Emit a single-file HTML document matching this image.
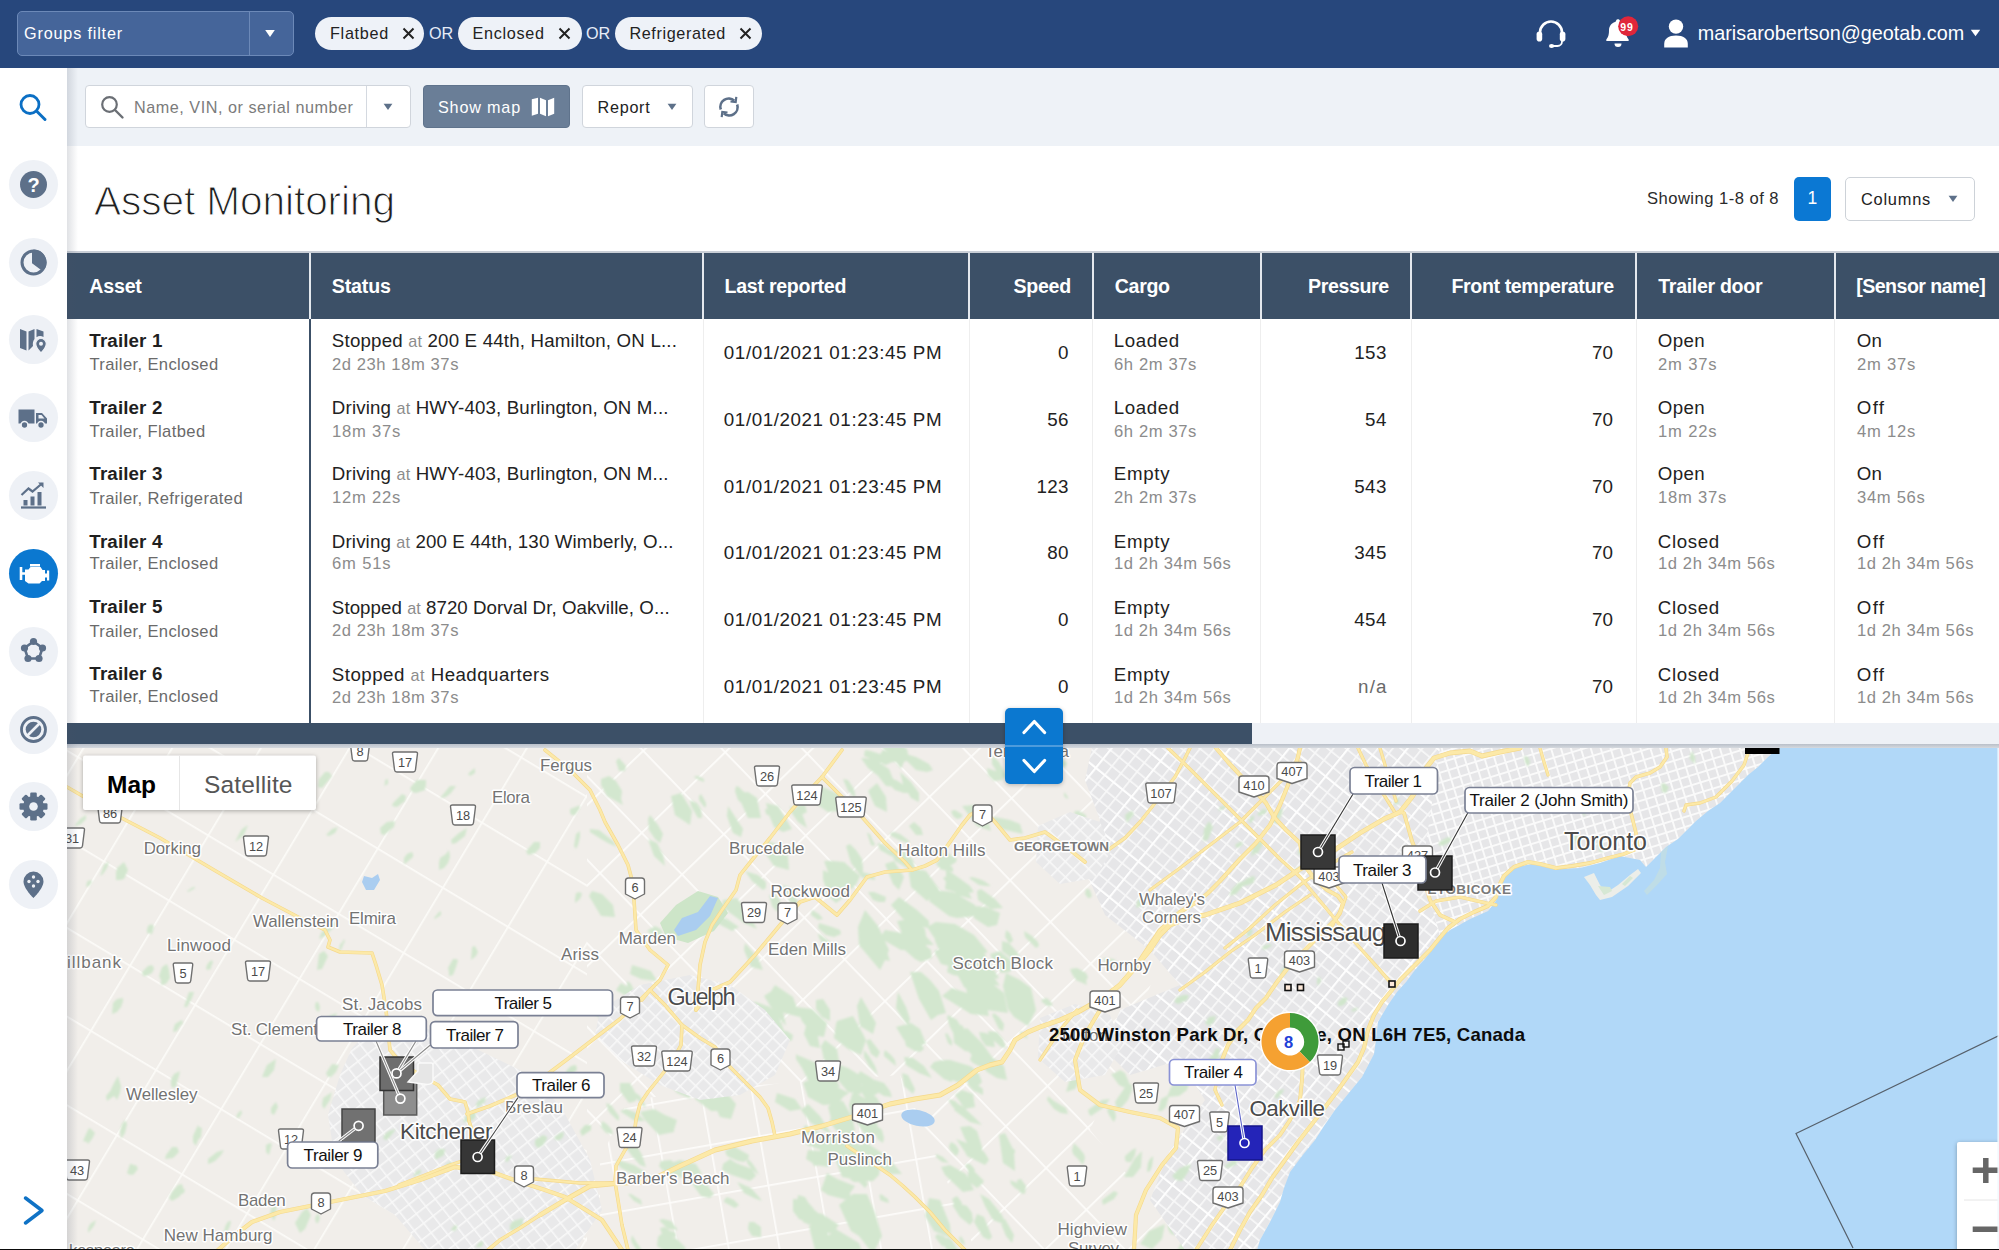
<!DOCTYPE html>
<html lang="en">
<head>
<meta charset="utf-8">
<title>Asset Monitoring</title>
<style>
*{box-sizing:border-box;margin:0;padding:0}
html,body{width:1999px;height:1250px;overflow:hidden;background:#fff}
body{position:relative;font-family:"Liberation Sans",Arial,sans-serif;color:#222}
.abs{position:absolute}
.z6{z-index:6}
.t{position:absolute;white-space:nowrap;line-height:1;z-index:3}
#topbar{position:absolute;left:0;top:0;width:1999px;height:68px;background:#27477c;z-index:2}
#gf{position:absolute;left:17px;top:11px;width:277px;height:45px;background:#45659a;border:1px solid #6c89b8;border-radius:5px;z-index:2}
#gf .sep{position:absolute;left:231px;top:0;width:1px;height:43px;background:#6c89b8}
.pill{position:absolute;top:17px;height:33px;border-radius:17px;background:#eef2f8;z-index:2}
svg.abs{z-index:3}
svg.abs.z6{z-index:6}
#side{position:absolute;left:0;top:68px;width:67px;height:1182px;background:#fff;z-index:5}
#sideshadow{position:absolute;left:67px;top:68px;width:11px;height:1182px;background:linear-gradient(90deg,rgba(70,80,100,.17),rgba(70,80,100,0));z-index:5}
.ic{position:absolute;left:9px;width:49px;height:49px;border-radius:50%;z-index:6}
.ic svg{position:absolute;left:0;top:0}
#toolbar{position:absolute;left:67px;top:68px;width:1932px;height:78px;background:#eef2f7}
.btn{position:absolute;top:85px;height:43px;border-radius:4px;background:#fff;border:1px solid #d0d5dc;z-index:2}
#thead{position:absolute;left:67px;top:253px;width:1932px;height:66px;background:#3c5067}
.hd{position:absolute;top:253px;width:2px;height:66px;background:#e4e8ed;z-index:2}
.bd{position:absolute;top:319px;width:1px;height:404px;background:#eeeeee}

</style>
</head>
<body>

<!-- top bar -->
<div id="topbar"></div>
<div id="gf"><div class="sep"></div></div>
<svg class="abs" style="left:264px;top:29px" width="12" height="9" viewBox="0 0 12 9"><path d="M1.2 1h9.6L6 8z" fill="#fff"/></svg>
<div class="pill" style="left:315px;width:109px"></div>
<svg class="abs" style="left:401.5px;top:27px" width="13" height="13" viewBox="0 0 13 13"><path d="M1.5 1.5l10 10M11.5 1.5l-10 10" stroke="#222" stroke-width="2" fill="none"/></svg>
<div class="pill" style="left:458px;width:124px"></div>
<svg class="abs" style="left:558.3px;top:27px" width="13" height="13" viewBox="0 0 13 13"><path d="M1.5 1.5l10 10M11.5 1.5l-10 10" stroke="#222" stroke-width="2" fill="none"/></svg>
<div class="pill" style="left:615px;width:147px"></div>
<svg class="abs" style="left:739px;top:27px" width="13" height="13" viewBox="0 0 13 13"><path d="M1.5 1.5l10 10M11.5 1.5l-10 10" stroke="#222" stroke-width="2" fill="none"/></svg>
<svg class="abs" style="left:1534px;top:17px" width="34" height="34" viewBox="0 0 34 34">
<path d="M6 19v-3.5a11 11 0 0 1 22 0V19" fill="none" stroke="#fff" stroke-width="2.6"/>
<rect x="2.6" y="14.5" width="5.6" height="10" rx="2.8" fill="#fff"/><rect x="25.8" y="14.5" width="5.6" height="10" rx="2.8" fill="#fff"/>
<path d="M28 23v1.5a4.5 4.5 0 0 1-4.5 4.5H19" fill="none" stroke="#fff" stroke-width="1.8"/>
<ellipse cx="17.6" cy="29" rx="2.6" ry="2" fill="#fff"/></svg>
<svg class="abs" style="left:1602px;top:14px" width="44" height="38" viewBox="0 0 44 38">
<path d="M15.5 6.2a2 2 0 0 1 2.6-1.9 2 2 0 0 1 1.4 1.9v.7c4 1 6 4.3 6 8.3 0 5.5 1.3 7.6 2.6 9.2.5.6.1 1.6-.8 1.6H6.7c-.9 0-1.3-1-.8-1.6 1.3-1.6 2.6-3.7 2.6-9.2 0-4 2.4-7.3 6-8.3z" fill="#fff" transform="translate(-1.5,1)"/>
<path d="M12.5 29.5h7a3.5 3.5 0 0 1-7 0z" fill="#fff"/>
<circle cx="26.2" cy="12.2" r="10" fill="#e0263a"/></svg>
<svg class="abs" style="left:1662px;top:18px" width="28" height="30" viewBox="0 0 28 30">
<circle cx="14" cy="8.6" r="7.2" fill="#fff"/><path d="M2.2 29.5v-3.5c0-5.5 4.5-8.5 11.8-8.5s11.8 3 11.8 8.5v3.5z" fill="#fff"/></svg>
<svg class="abs" style="left:1970px;top:29px" width="11" height="8" viewBox="0 0 11 8"><path d="M.8.8h9.4L5.5 7.2z" fill="#fff"/></svg>
<!-- sidebar -->
<div id="side"></div><div id="sideshadow"></div>
<svg class="abs z6" style="left:16px;top:91px" width="34" height="34" viewBox="0 0 34 34">
<circle cx="14" cy="13.5" r="9" fill="none" stroke="#0b6fc4" stroke-width="2.8"/><path d="M20.5 20l8.5 8.5" stroke="#0b6fc4" stroke-width="3" stroke-linecap="round"/></svg>
<div class="ic" style="top:160px;background:#eef1f6"><svg width="49" height="49" viewBox="0 0 49 49"><circle cx="24.5" cy="24.5" r="13.5" fill="#5d7089"/><text x="24.5" y="31.5" text-anchor="middle" font-family="Liberation Sans,Arial,sans-serif" font-weight="bold" font-size="20" fill="#fff">?</text></svg></div>
<div class="ic" style="top:238px;background:#eef1f6"><svg width="49" height="49" viewBox="0 0 49 49"><circle cx="24.5" cy="24.5" r="11.5" fill="none" stroke="#5d7089" stroke-width="3"/><path d="M24.5 24.5V11.5a13 13 0 0 1 11.3 19.5z" fill="#5d7089"/><path d="M24.5 13v11.5l9.5 7" fill="none" stroke="#5d7089" stroke-width="3"/></svg></div>
<div class="ic" style="top:314.5px;background:#eef1f6"><svg width="49" height="49" viewBox="0 0 49 49"><path d="M11 14l6.5 2.5v19L11 33zM19.5 16.5l6-2.5v10c-1.5 2-2 4-1.5 7l-4.5 4.5zM27.5 14l7 2.5v5.5c-2.5-1.5-5-1.2-7 .2z" fill="#5d7089"/><path d="M32 23.5a5.3 5.3 0 0 1 5.3 5.3c0 3.7-5.3 9.2-5.3 9.2s-5.3-5.5-5.3-9.2a5.3 5.3 0 0 1 5.3-5.3z" fill="#5d7089" stroke="#eef1f6" stroke-width="1.2"/><circle cx="32" cy="28.8" r="2" fill="#eef1f6"/></svg></div>
<div class="ic" style="top:393px;background:#eef1f6"><svg width="49" height="49" viewBox="0 0 49 49"><path d="M9.5 16.5h16v14h-16zM27 20h6l5 5.5v5h-11z" fill="#5d7089"/><circle cx="15.5" cy="32" r="3.4" fill="#5d7089" stroke="#eef1f6" stroke-width="1.5"/><circle cx="32" cy="32" r="3.4" fill="#5d7089" stroke="#eef1f6" stroke-width="1.5"/><path d="M29.5 22h3l3 3.5h-6z" fill="#eef1f6"/></svg></div>
<div class="ic" style="top:471px;background:#eef1f6"><svg width="49" height="49" viewBox="0 0 49 49"><path d="M12 36.5h25" stroke="#5d7089" stroke-width="2.2"/><path d="M14.5 29h4v5.5h-4zM21.5 25.5h4v9h-4zM28.5 21h4v13.5h-4z" fill="#5d7089"/><path d="M12.5 24l7-6.5 4 3 9.5-8" fill="none" stroke="#5d7089" stroke-width="2.2"/><path d="M29 11.5h5.5v5.5z" fill="#5d7089"/></svg></div>
<div class="ic" style="top:548.5px;background:#0b78d0"><svg width="49" height="49" viewBox="0 0 49 49"><path d="M12 18v13M12 24.5h4" stroke="#fff" stroke-width="2.6" fill="none"/><path d="M16 20.5h3.5l2-2.5h10l2 3h2.5v3.5h2v-3h2.2v10H38v-3h-2v3.5h-3l-2.5 2.5H19.5L16 32z" fill="#fff"/><path d="M21 15h10v2.5H21z" fill="#fff"/></svg></div>
<div class="ic" style="top:626.5px;background:#eef1f6"><svg width="49" height="49" viewBox="0 0 49 49"><path d="M24.5 14.5l9 6.5-3.5 10.5h-11L15.5 21z" fill="none" stroke="#5d7089" stroke-width="2.6"/><circle cx="24.5" cy="14.5" r="3.6" fill="#5d7089"/><circle cx="33.5" cy="21" r="3.6" fill="#5d7089"/><circle cx="30" cy="31.5" r="3.6" fill="#5d7089"/><circle cx="19" cy="31.5" r="3.6" fill="#5d7089"/><circle cx="15.5" cy="21" r="3.6" fill="#5d7089"/></svg></div>
<div class="ic" style="top:704.5px;background:#eef1f6"><svg width="49" height="49" viewBox="0 0 49 49"><circle cx="24.5" cy="24.5" r="12" fill="none" stroke="#5d7089" stroke-width="2.8"/><circle cx="24.5" cy="24.5" r="7.8" fill="#5d7089"/><path d="M17.5 31.5l14-14" stroke="#eef1f6" stroke-width="2.6"/></svg></div>
<div class="ic" style="top:781.5px;background:#eef1f6"><svg width="49" height="49" viewBox="0 0 49 49"><g transform="translate(24.5 24.5)" fill="#5d7089"><rect x="-3.3" y="-14" width="6.6" height="8" rx="1.2" transform="rotate(0)"/><rect x="-3.3" y="-14" width="6.6" height="8" rx="1.2" transform="rotate(45)"/><rect x="-3.3" y="-14" width="6.6" height="8" rx="1.2" transform="rotate(90)"/><rect x="-3.3" y="-14" width="6.6" height="8" rx="1.2" transform="rotate(135)"/><rect x="-3.3" y="-14" width="6.6" height="8" rx="1.2" transform="rotate(180)"/><rect x="-3.3" y="-14" width="6.6" height="8" rx="1.2" transform="rotate(225)"/><rect x="-3.3" y="-14" width="6.6" height="8" rx="1.2" transform="rotate(270)"/><rect x="-3.3" y="-14" width="6.6" height="8" rx="1.2" transform="rotate(315)"/><circle r="10.5"/><circle r="4.3" fill="#eef1f6"/></g></svg></div>
<div class="ic" style="top:859.5px;background:#eef1f6"><svg width="49" height="49" viewBox="0 0 49 49"><path d="M24.5 11.5a10 10 0 0 1 10 10c0 7-10 16.5-10 16.5s-10-9.5-10-16.5a10 10 0 0 1 10-10z" fill="#5d7089"/><circle cx="24.5" cy="17" r="1.7" fill="#eef1f6"/><circle cx="20" cy="21.5" r="1.7" fill="#eef1f6"/><circle cx="29" cy="21.5" r="1.7" fill="#eef1f6"/><circle cx="24.5" cy="26" r="1.7" fill="#eef1f6"/></svg></div>
<svg class="abs z6" style="left:21px;top:1194px" width="24" height="34" viewBox="0 0 24 34"><path d="M4.5 4L21 16.5L4.5 29" fill="none" stroke="#0f72c5" stroke-width="3.5" stroke-linecap="round" stroke-linejoin="round"/></svg>
<!-- toolbar + title -->
<div id="toolbar"></div>
<div class="btn" style="left:85px;width:326px"><div class="abs" style="left:280px;top:0;width:1px;height:41px;background:#d4d9e0"></div></div>
<svg class="abs" style="left:99px;top:94px" width="26" height="26" viewBox="0 0 26 26"><circle cx="10.5" cy="10.5" r="7.3" fill="none" stroke="#6b6f75" stroke-width="2.2"/><path d="M16 16l7.5 7.5" stroke="#6b6f75" stroke-width="2.4" stroke-linecap="round"/></svg>
<svg class="abs" style="left:383px;top:103px" width="10" height="8" viewBox="0 0 10 8"><path d="M.6.8h8.8L5 7z" fill="#5d7089"/></svg>
<div class="btn" style="left:423px;width:147px;background:#6a7e97;border-color:#5f738c"></div>
<svg class="abs" style="left:531px;top:97px" width="24" height="20" viewBox="0 0 24 20"><path d="M.8 2.2L7 .8v16L.8 18.8zM9 .8l6 2.4v16L9 16.8zM17 3.2L23.2.8v16L17 19.2z" fill="#fff"/></svg>
<div class="btn" style="left:582px;width:111px"></div>
<svg class="abs" style="left:667px;top:103px" width="10" height="8" viewBox="0 0 10 8"><path d="M.6.8h8.8L5 7z" fill="#5d7089"/></svg>
<div class="btn" style="left:704px;width:50px"></div>
<svg class="abs" style="left:716px;top:94px" width="26" height="26" viewBox="0 0 26 26" fill="none" stroke="#5d7089" stroke-width="2.6">
<path d="M4.8 15.5a8.3 8.3 0 0 1 13.5-8.7"/><path d="M21.2 10.5a8.3 8.3 0 0 1-13.5 8.7"/>
<path d="M14.5 7.5l5.2.6.6-5.2" stroke-width="2.2"/><path d="M11.5 18.5l-5.2-.6-.6 5.2" stroke-width="2.2"/></svg>
<div class="abs" style="left:1794px;top:177px;width:37px;height:44px;border-radius:5px;background:#0b78d3"></div>
<div class="abs" style="left:1845px;top:177px;width:130px;height:44px;border-radius:5px;background:#fff;border:1.5px solid #cdd2d8"></div>
<svg class="abs" style="left:1948px;top:195px" width="10" height="8" viewBox="0 0 10 8"><path d="M.6.8h8.8L5 7z" fill="#5d7089"/></svg>
<!-- table -->
<div class="abs" style="left:67px;top:251px;width:1932px;height:2px;background:#c9ced6"></div>
<div id="thead"></div>
<div class="hd" style="left:309px"></div>
<div class="abs" style="left:309px;top:319px;width:2px;height:404px;background:#3c5067"></div>
<div class="hd" style="left:702px"></div>
<div class="bd" style="left:702.5px"></div>
<div class="hd" style="left:968px"></div>
<div class="bd" style="left:968.5px"></div>
<div class="hd" style="left:1091.5px"></div>
<div class="bd" style="left:1092px"></div>
<div class="hd" style="left:1259.5px"></div>
<div class="bd" style="left:1260px"></div>
<div class="hd" style="left:1410px"></div>
<div class="bd" style="left:1410.5px"></div>
<div class="hd" style="left:1635px"></div>
<div class="bd" style="left:1635.5px"></div>
<div class="hd" style="left:1833.5px"></div>
<div class="bd" style="left:1834px"></div>
<div class="abs" style="left:67px;top:723px;width:1932px;height:21px;background:#eef1f6"></div>
<div class="abs" style="left:67px;top:723px;width:1185px;height:21px;background:#3c5067"></div>
<div class="abs" style="left:67px;top:744px;width:1932px;height:4px;background:linear-gradient(#b9bfc9,#d5d9df)"></div>
<!-- text -->
<div class="t" style="left:24.01px;top:25.28px;font-size:16.2px;color:#fff;letter-spacing:0.831px;">Groups filter</div>
<div class="t" style="left:330.01px;top:25.48px;font-size:16.2px;letter-spacing:0.711px;">Flatbed</div>
<div class="t" style="left:472.61px;top:25.48px;font-size:16.2px;letter-spacing:0.673px;">Enclosed</div>
<div class="t" style="left:629.41px;top:25.48px;font-size:16.2px;letter-spacing:0.624px;">Refrigerated</div>
<div class="t" style="left:429.01px;top:25.48px;font-size:16.2px;color:#e6ecf7;letter-spacing:-0.151px;">OR</div>
<div class="t" style="left:586.01px;top:25.48px;font-size:16.2px;color:#e6ecf7;letter-spacing:-0.151px;">OR</div>
<div class="t" style="left:1620.36px;top:21.51px;font-size:10.5px;font-weight:bold;color:#fff;letter-spacing:0.798px;">99</div>
<div class="t" style="left:1697.79px;top:23.64px;font-size:19.8px;color:#fff;letter-spacing:0.002px;">marisarobertson@geotab.com</div>
<div class="t" style="left:134.01px;top:99.08px;font-size:16.2px;color:#7b7b7b;letter-spacing:0.532px;">Name, VIN, or serial number</div>
<div class="t" style="left:438.01px;top:99.08px;font-size:16.2px;color:#fff;letter-spacing:0.812px;">Show map</div>
<div class="t" style="left:597.51px;top:99.08px;font-size:16.2px;letter-spacing:0.731px;">Report</div>
<div class="t" style="left:94.02px;top:180.92px;font-size:40.6px;color:#1f1f1f;letter-spacing:-0.079px;-webkit-text-stroke:1.1px #fff;">Asset Monitoring</div>
<div class="t" style="left:1646.99px;top:191.04px;font-size:16.6px;color:#2b2b2b;letter-spacing:0.468px;">Showing 1-8 of 8</div>
<div class="t" style="left:1807.5px;top:190.48px;font-size:17.5px;color:#fff;">1</div>
<div class="t" style="left:1861px;top:191.21px;font-size:16.4px;letter-spacing:0.76px;">Columns</div>
<div class="t" style="left:89.3px;top:277.2px;font-size:19.6px;font-weight:bold;color:#fff;letter-spacing:-0.196px;">Asset</div>
<div class="t" style="left:331.8px;top:277.2px;font-size:19.6px;font-weight:bold;color:#fff;letter-spacing:-0.166px;">Status</div>
<div class="t" style="left:724.5px;top:277.2px;font-size:19.6px;font-weight:bold;color:#fff;letter-spacing:-0.271px;">Last reported</div>
<div class="t" style="right:928.09px;top:277.2px;font-size:19.6px;font-weight:bold;color:#fff;letter-spacing:-0.283px;">Speed</div>
<div class="t" style="left:1114.8px;top:277.2px;font-size:19.6px;font-weight:bold;color:#fff;letter-spacing:-0.346px;">Cargo</div>
<div class="t" style="right:610.18px;top:277.2px;font-size:19.6px;font-weight:bold;color:#fff;letter-spacing:-0.374px;">Pressure</div>
<div class="t" style="right:385.18px;top:277.2px;font-size:19.6px;font-weight:bold;color:#fff;letter-spacing:-0.374px;">Front temperature</div>
<div class="t" style="left:1658.3px;top:277.2px;font-size:19.6px;font-weight:bold;color:#fff;letter-spacing:-0.325px;">Trailer door</div>
<div class="t" style="left:1856.3px;top:277.2px;font-size:19.6px;font-weight:bold;color:#fff;letter-spacing:-0.555px;">[Sensor name]</div>
<div class="t" style="left:89.35px;top:331.88px;font-size:18.8px;font-weight:bold;color:#1f1f1f;letter-spacing:0.117px;">Trailer 1</div>
<div class="t" style="left:89.49px;top:357.34px;font-size:16.6px;color:#6a6a6a;letter-spacing:0.356px;">Trailer, Enclosed</div>
<div class="t" style="left:331.86px;top:332.47px;font-size:18.7px;letter-spacing:0.191px;">Stopped <span style="font-size:16.2px;color:#8c8c8c">at</span> 200 E 44th, Hamilton, ON L...</div>
<div class="t" style="left:331.99px;top:356.74px;font-size:16.6px;color:#8c8c8c;letter-spacing:0.572px;">2d 23h 18m 37s</div>
<div class="t" style="left:723.85px;top:344.38px;font-size:18.8px;letter-spacing:0.572px;">01/01/2021 01:23:45 PM</div>
<div class="t" style="right:930.2px;top:344.38px;font-size:18.8px;letter-spacing:0.3px;">0</div>
<div class="t" style="left:1113.86px;top:332.47px;font-size:18.7px;letter-spacing:0.571px;">Loaded</div>
<div class="t" style="left:1113.99px;top:356.74px;font-size:16.6px;color:#8c8c8c;letter-spacing:0.616px;">6h 2m 37s</div>
<div class="t" style="right:612px;top:344.38px;font-size:18.8px;letter-spacing:0.5px;">153</div>
<div class="t" style="right:385.8px;top:344.38px;font-size:18.8px;letter-spacing:0.2px;">70</div>
<div class="t" style="left:1657.86px;top:332.47px;font-size:18.7px;letter-spacing:0.392px;">Open</div>
<div class="t" style="left:1657.99px;top:356.74px;font-size:16.6px;color:#8c8c8c;letter-spacing:0.851px;">2m 37s</div>
<div class="t" style="left:1856.86px;top:332.47px;font-size:18.7px;letter-spacing:0.174px;">On</div>
<div class="t" style="left:1856.99px;top:356.74px;font-size:16.6px;color:#8c8c8c;letter-spacing:0.768px;">2m 37s</div>
<div class="t" style="left:89.35px;top:398.68px;font-size:18.8px;font-weight:bold;color:#1f1f1f;letter-spacing:0.117px;">Trailer 2</div>
<div class="t" style="left:89.49px;top:424.24px;font-size:16.6px;color:#6a6a6a;letter-spacing:0.373px;">Trailer, Flatbed</div>
<div class="t" style="left:331.86px;top:398.97px;font-size:18.7px;letter-spacing:0.158px;">Driving <span style="font-size:16.2px;color:#8c8c8c">at</span> HWY-403, Burlington, ON M...</div>
<div class="t" style="left:331.99px;top:423.74px;font-size:16.6px;color:#8c8c8c;letter-spacing:0.768px;">18m 37s</div>
<div class="t" style="left:723.85px;top:411.08px;font-size:18.8px;letter-spacing:0.572px;">01/01/2021 01:23:45 PM</div>
<div class="t" style="right:930.2px;top:411.08px;font-size:18.8px;letter-spacing:0.3px;">56</div>
<div class="t" style="left:1113.86px;top:398.97px;font-size:18.7px;letter-spacing:0.571px;">Loaded</div>
<div class="t" style="left:1113.99px;top:423.74px;font-size:16.6px;color:#8c8c8c;letter-spacing:0.616px;">6h 2m 37s</div>
<div class="t" style="right:612px;top:411.08px;font-size:18.8px;letter-spacing:0.5px;">54</div>
<div class="t" style="right:385.8px;top:411.08px;font-size:18.8px;letter-spacing:0.2px;">70</div>
<div class="t" style="left:1657.86px;top:398.97px;font-size:18.7px;letter-spacing:0.392px;">Open</div>
<div class="t" style="left:1657.99px;top:423.74px;font-size:16.6px;color:#8c8c8c;letter-spacing:0.851px;">1m 22s</div>
<div class="t" style="left:1856.86px;top:398.97px;font-size:18.7px;letter-spacing:1.231px;">Off</div>
<div class="t" style="left:1856.99px;top:423.74px;font-size:16.6px;color:#8c8c8c;letter-spacing:0.768px;">4m 12s</div>
<div class="t" style="left:89.35px;top:464.88px;font-size:18.8px;font-weight:bold;color:#1f1f1f;letter-spacing:0.117px;">Trailer 3</div>
<div class="t" style="left:89.49px;top:490.74px;font-size:16.6px;color:#6a6a6a;letter-spacing:0.357px;">Trailer, Refrigerated</div>
<div class="t" style="left:331.86px;top:465.47px;font-size:18.7px;letter-spacing:0.158px;">Driving <span style="font-size:16.2px;color:#8c8c8c">at</span> HWY-403, Burlington, ON M...</div>
<div class="t" style="left:331.99px;top:490.24px;font-size:16.6px;color:#8c8c8c;letter-spacing:0.768px;">12m 22s</div>
<div class="t" style="left:723.85px;top:477.88px;font-size:18.8px;letter-spacing:0.572px;">01/01/2021 01:23:45 PM</div>
<div class="t" style="right:930.2px;top:477.88px;font-size:18.8px;letter-spacing:0.3px;">123</div>
<div class="t" style="left:1113.86px;top:465.47px;font-size:18.7px;letter-spacing:0.663px;">Empty</div>
<div class="t" style="left:1113.99px;top:490.24px;font-size:16.6px;color:#8c8c8c;letter-spacing:0.616px;">2h 2m 37s</div>
<div class="t" style="right:612px;top:477.88px;font-size:18.8px;letter-spacing:0.5px;">543</div>
<div class="t" style="right:385.8px;top:477.88px;font-size:18.8px;letter-spacing:0.2px;">70</div>
<div class="t" style="left:1657.86px;top:465.47px;font-size:18.7px;letter-spacing:0.392px;">Open</div>
<div class="t" style="left:1657.99px;top:490.24px;font-size:16.6px;color:#8c8c8c;letter-spacing:0.768px;">18m 37s</div>
<div class="t" style="left:1856.86px;top:465.47px;font-size:18.7px;letter-spacing:0.174px;">On</div>
<div class="t" style="left:1856.99px;top:490.24px;font-size:16.6px;color:#8c8c8c;letter-spacing:0.696px;">34m 56s</div>
<div class="t" style="left:89.35px;top:532.88px;font-size:18.8px;font-weight:bold;color:#1f1f1f;letter-spacing:0.117px;">Trailer 4</div>
<div class="t" style="left:89.49px;top:555.54px;font-size:16.6px;color:#6a6a6a;letter-spacing:0.356px;">Trailer, Enclosed</div>
<div class="t" style="left:331.86px;top:532.97px;font-size:18.7px;letter-spacing:0.136px;">Driving <span style="font-size:16.2px;color:#8c8c8c">at</span> 200 E 44th, 130 Wimberly, O...</div>
<div class="t" style="left:331.99px;top:556.44px;font-size:16.6px;color:#8c8c8c;letter-spacing:0.851px;">6m 51s</div>
<div class="t" style="left:723.85px;top:544.38px;font-size:18.8px;letter-spacing:0.572px;">01/01/2021 01:23:45 PM</div>
<div class="t" style="right:930.2px;top:544.38px;font-size:18.8px;letter-spacing:0.3px;">80</div>
<div class="t" style="left:1113.86px;top:532.97px;font-size:18.7px;letter-spacing:0.663px;">Empty</div>
<div class="t" style="left:1113.99px;top:556.44px;font-size:16.6px;color:#8c8c8c;letter-spacing:0.596px;">1d 2h 34m 56s</div>
<div class="t" style="right:612px;top:544.38px;font-size:18.8px;letter-spacing:0.5px;">345</div>
<div class="t" style="right:385.8px;top:544.38px;font-size:18.8px;letter-spacing:0.2px;">70</div>
<div class="t" style="left:1657.86px;top:532.97px;font-size:18.7px;letter-spacing:0.602px;">Closed</div>
<div class="t" style="left:1657.99px;top:556.44px;font-size:16.6px;color:#8c8c8c;letter-spacing:0.596px;">1d 2h 34m 56s</div>
<div class="t" style="left:1856.86px;top:532.97px;font-size:18.7px;letter-spacing:1.231px;">Off</div>
<div class="t" style="left:1856.99px;top:556.44px;font-size:16.6px;color:#8c8c8c;letter-spacing:0.558px;">1d 2h 34m 56s</div>
<div class="t" style="left:89.35px;top:598.18px;font-size:18.8px;font-weight:bold;color:#1f1f1f;letter-spacing:0.117px;">Trailer 5</div>
<div class="t" style="left:89.49px;top:623.74px;font-size:16.6px;color:#6a6a6a;letter-spacing:0.356px;">Trailer, Enclosed</div>
<div class="t" style="left:331.86px;top:599.47px;font-size:18.7px;letter-spacing:0.055px;">Stopped <span style="font-size:16.2px;color:#8c8c8c">at</span> 8720 Dorval Dr, Oakville, O...</div>
<div class="t" style="left:331.99px;top:623.04px;font-size:16.6px;color:#8c8c8c;letter-spacing:0.572px;">2d 23h 18m 37s</div>
<div class="t" style="left:723.85px;top:611.08px;font-size:18.8px;letter-spacing:0.572px;">01/01/2021 01:23:45 PM</div>
<div class="t" style="right:930.2px;top:611.08px;font-size:18.8px;letter-spacing:0.3px;">0</div>
<div class="t" style="left:1113.86px;top:599.47px;font-size:18.7px;letter-spacing:0.663px;">Empty</div>
<div class="t" style="left:1113.99px;top:623.04px;font-size:16.6px;color:#8c8c8c;letter-spacing:0.596px;">1d 2h 34m 56s</div>
<div class="t" style="right:612px;top:611.08px;font-size:18.8px;letter-spacing:0.5px;">454</div>
<div class="t" style="right:385.8px;top:611.08px;font-size:18.8px;letter-spacing:0.2px;">70</div>
<div class="t" style="left:1657.86px;top:599.47px;font-size:18.7px;letter-spacing:0.602px;">Closed</div>
<div class="t" style="left:1657.99px;top:623.04px;font-size:16.6px;color:#8c8c8c;letter-spacing:0.596px;">1d 2h 34m 56s</div>
<div class="t" style="left:1856.86px;top:599.47px;font-size:18.7px;letter-spacing:1.231px;">Off</div>
<div class="t" style="left:1856.99px;top:623.04px;font-size:16.6px;color:#8c8c8c;letter-spacing:0.558px;">1d 2h 34m 56s</div>
<div class="t" style="left:89.35px;top:665.38px;font-size:18.8px;font-weight:bold;color:#1f1f1f;letter-spacing:0.117px;">Trailer 6</div>
<div class="t" style="left:89.49px;top:688.74px;font-size:16.6px;color:#6a6a6a;letter-spacing:0.356px;">Trailer, Enclosed</div>
<div class="t" style="left:331.86px;top:665.67px;font-size:18.7px;letter-spacing:0.479px;">Stopped <span style="font-size:16.2px;color:#8c8c8c">at</span> Headquarters</div>
<div class="t" style="left:331.99px;top:689.74px;font-size:16.6px;color:#8c8c8c;letter-spacing:0.572px;">2d 23h 18m 37s</div>
<div class="t" style="left:723.85px;top:677.88px;font-size:18.8px;letter-spacing:0.572px;">01/01/2021 01:23:45 PM</div>
<div class="t" style="right:930.2px;top:677.88px;font-size:18.8px;letter-spacing:0.3px;">0</div>
<div class="t" style="left:1113.86px;top:665.67px;font-size:18.7px;letter-spacing:0.663px;">Empty</div>
<div class="t" style="left:1113.99px;top:689.74px;font-size:16.6px;color:#8c8c8c;letter-spacing:0.596px;">1d 2h 34m 56s</div>
<div class="t" style="right:611.3px;top:677.88px;font-size:18.8px;color:#6a6a6a;letter-spacing:1.2px;">n/a</div>
<div class="t" style="right:385.8px;top:677.88px;font-size:18.8px;letter-spacing:0.2px;">70</div>
<div class="t" style="left:1657.86px;top:665.67px;font-size:18.7px;letter-spacing:0.602px;">Closed</div>
<div class="t" style="left:1657.99px;top:689.74px;font-size:16.6px;color:#8c8c8c;letter-spacing:0.596px;">1d 2h 34m 56s</div>
<div class="t" style="left:1856.86px;top:665.67px;font-size:18.7px;letter-spacing:1.231px;">Off</div>
<div class="t" style="left:1856.99px;top:689.74px;font-size:16.6px;color:#8c8c8c;letter-spacing:0.558px;">1d 2h 34m 56s</div>
<!-- map -->
<svg class="abs" style="left:67px;top:748px;z-index:1" width="1932" height="502" viewBox="67 748 1932 502">
<defs><pattern id="pRuralL" width="76" height="76" patternUnits="userSpaceOnUse" patternTransform="rotate(31)"><rect width="76" height="76" fill="#f1eeea"/><path d="M0 0H76" stroke="#fcfbf8" stroke-width="3.4"/><path d="M0 0V76" stroke="#fcfbf8" stroke-width="3.4"/></pattern><pattern id="pRuralM" width="58" height="58" patternUnits="userSpaceOnUse" patternTransform="rotate(46)"><rect width="58" height="58" fill="#f1eeea"/><path d="M0 0H58" stroke="#fdfcfa" stroke-width="3.6"/><path d="M0 0V58" stroke="#fdfcfa" stroke-width="3.6"/></pattern><pattern id="pRuralS" width="50" height="50" patternUnits="userSpaceOnUse" patternTransform="rotate(-10)"><rect width="50" height="50" fill="#f1eeea"/><path d="M0 0H50" stroke="#fdfcfa" stroke-width="3.4"/><path d="M0 0V50" stroke="#fdfcfa" stroke-width="3.4"/></pattern><pattern id="pUrbW" width="11.5" height="11.5" patternUnits="userSpaceOnUse" patternTransform="rotate(-51)"><rect width="11.5" height="11.5" fill="#e6e6e8"/><path d="M0 0H11.5" stroke="#f8f8f8" stroke-width="3.4"/><path d="M0 0V11.5" stroke="#f8f8f8" stroke-width="3.4"/></pattern><pattern id="pUrbW2" width="46" height="46" patternUnits="userSpaceOnUse" patternTransform="rotate(-51)"><rect width="46" height="46" fill="none"/><path d="M0 0H46" stroke="#fff" stroke-width="3.2"/><path d="M0 0V46" stroke="#fff" stroke-width="3.2"/></pattern><pattern id="pUrbT" width="9.5" height="9.5" patternUnits="userSpaceOnUse" patternTransform="rotate(-17)"><rect width="9.5" height="9.5" fill="#e6e6e8"/><path d="M0 0H9.5" stroke="#fafafa" stroke-width="3.8"/><path d="M0 0V9.5" stroke="#fafafa" stroke-width="3.8"/></pattern><pattern id="pUrbK" width="12" height="12" patternUnits="userSpaceOnUse" patternTransform="rotate(-38)"><rect width="12" height="12" fill="#e9e9ea"/><path d="M0 0H12" stroke="#f8f8f8" stroke-width="3.2"/><path d="M0 0V12" stroke="#f8f8f8" stroke-width="3.2"/></pattern><pattern id="pUrbG" width="11" height="11" patternUnits="userSpaceOnUse" patternTransform="rotate(44)"><rect width="11" height="11" fill="#e9e9ea"/><path d="M0 0H11" stroke="#f8f8f8" stroke-width="3.2"/><path d="M0 0V11" stroke="#f8f8f8" stroke-width="3.2"/></pattern><pattern id="pUrbO" width="12" height="12" patternUnits="userSpaceOnUse" patternTransform="rotate(-58)"><rect width="12" height="12" fill="#e6e6e8"/><path d="M0 0H12" stroke="#f7f7f7" stroke-width="2.4"/><path d="M0 0V12" stroke="#f7f7f7" stroke-width="2.4"/></pattern><filter id="soft" x="-5%" y="-5%" width="110%" height="110%"><feGaussianBlur stdDeviation="1.1"/></filter><clipPath id="mapclip"><rect x="67" y="748" width="1932" height="502"/></clipPath></defs>
<g clip-path="url(#mapclip)">
<!-- land / urban / parks -->
<rect x="67" y="748" width="1932" height="502" fill="#f1eeea"/>
<rect x="67" y="748" width="520" height="502" fill="url(#pRuralL)"/>
<polygon points="587,748 1135,748 1100,870 1160,960 1130,1040 1090,1130 1190,1250 587,1250" fill="url(#pRuralM)"/>
<polygon points="628,1100 760,1085 900,1075 930,1140 975,1250 600,1250 600,1160" fill="url(#pRuralS)"/>
<path d="M248 825L246 830L243 836L239 839L235 842L239 834L242 829ZM109 861L107 868L103 874L100 876L104 865ZM337 1013L334 1020L329 1025L320 1028L318 1027L323 1020L331 1015ZM329 772L332 776L328 781L322 788L318 787L319 779L325 772ZM440 1190L443 1193L439 1202L435 1198L436 1192ZM154 968L154 969L152 973L146 976L143 976L142 972L148 966L152 965ZM426 780L426 784L425 790L416 793L412 792L410 788L417 780L419 780ZM276 1059L274 1070L268 1077L262 1077L267 1065ZM96 1220L94 1226L88 1233L88 1229L90 1224ZM339 1065L336 1072L331 1077L328 1077L326 1073L332 1064ZM307 1208L311 1215L305 1229L300 1233L295 1223L302 1212ZM276 1102L278 1107L276 1111L274 1115L271 1113L271 1108L274 1104ZM318 1213L320 1218L318 1223L316 1223L315 1218ZM212 960L213 962L211 967L211 969L207 970L206 968L207 965L209 962ZM115 1089L114 1096L107 1101L106 1096L111 1090ZM341 1092L339 1099L337 1105L333 1104L332 1103L335 1097ZM118 1076L121 1086L120 1093L117 1100L113 1094L111 1089L114 1083ZM241 1110L242 1113L239 1118L236 1117L238 1113ZM540 842L540 848L535 853L528 855L526 851L528 849L534 842ZM195 887L195 888L192 890L190 891L188 892L187 891L190 889L193 887ZM91 880L92 882L89 886L86 887L87 882L88 881ZM185 1189L184 1193L176 1196L173 1195L180 1187ZM381 1094L381 1100L379 1103L378 1102L378 1099ZM318 1002L319 1004L320 1007L319 1012L316 1010L315 1006L316 1002ZM442 995L443 997L444 1003L441 1008L439 1009L437 1006L438 1002L439 999ZM136 1165L138 1169L133 1175L129 1174L128 1170L131 1166ZM449 850L450 857L448 863L444 868L439 870L439 863L440 858L446 854ZM194 992L192 998L187 1007L184 1007L189 992ZM275 1201L277 1204L276 1215L274 1221L271 1216L270 1214L272 1203ZM151 924L154 926L153 931L152 934L147 933L147 930L148 926ZM132 1164L135 1167L133 1171L130 1175L127 1173L128 1170L130 1164ZM395 821L394 827L384 835L381 834L380 828L387 822ZM123 998L123 1001L121 1007L117 1012L112 1014L113 1003L117 999ZM344 939L345 941L343 945L341 950L339 951L340 944L342 943ZM437 1190L438 1194L439 1199L437 1203L434 1204L431 1203L431 1197L432 1194ZM86 815L86 819L81 824L76 826L75 825L80 819ZM580 892L582 894L580 899L575 903L575 899L576 893ZM332 1092L330 1100L324 1109L322 1105L323 1098ZM229 1221L231 1221L230 1226L227 1232L225 1232L224 1232L225 1227L227 1223ZM180 1071L179 1076L178 1079L176 1087L172 1088L171 1085L171 1079L174 1074ZM182 1020L183 1023L180 1026L177 1031L173 1032L174 1027L175 1024L180 1021ZM441 911L441 915L435 919L434 918L439 912ZM177 1147L179 1152L173 1158L165 1159L166 1155L172 1147ZM572 1178L573 1193L572 1201L567 1199L567 1188ZM462 1137L462 1139L462 1143L459 1147L456 1149L458 1143L460 1137ZM579 805L580 808L575 815L571 815L570 812L570 809L578 806ZM379 1060L381 1062L379 1068L377 1069L376 1065L376 1062ZM324 951L328 956L322 969L317 970L319 954ZM91 1129L95 1133L92 1139L88 1144L87 1142L83 1141L87 1132L89 1128ZM338 827L335 833L329 836L326 835L332 829ZM406 796L405 801L397 807L392 806L393 803L402 794ZM182 1184L184 1191L179 1197L172 1201L169 1198L172 1192L178 1185ZM199 1127L202 1128L201 1137L198 1140L196 1146L193 1142L193 1136L198 1125ZM475 768L475 773L470 776L468 774L471 771ZM467 828L465 836L456 843L452 844L451 840L459 833ZM270 1143L272 1144L270 1151L269 1155L266 1152L266 1149L266 1145ZM124 862L128 870L124 879L120 880L116 880L116 873L117 868ZM388 779L388 780L388 784L386 785L384 786L385 783L385 780ZM224 1150L221 1155L215 1161L211 1163L208 1164L208 1159L217 1152ZM412 852L413 854L413 857L406 863L404 864L404 858L407 854L409 853ZM200 775L201 778L197 783L194 785L192 781L194 777L196 775ZM459 1217L459 1222L450 1229L446 1230L447 1226L445 1224L454 1216ZM475 946L478 952L476 956L471 960L472 947ZM456 786L451 793L446 797L440 798L450 786ZM125 1120L127 1124L125 1133L121 1139L120 1131L122 1124ZM454 1143L455 1143L455 1146L454 1148L452 1151L451 1148L451 1146L452 1144ZM338 923L333 928L325 936L319 939L321 933L324 930L334 922ZM456 959L458 960L456 967L453 975L449 976L449 972L448 968L453 959ZM167 964L169 970L170 978L166 984L161 985L161 980L159 976L162 967ZM580 831L580 837L578 845L576 849L574 846L576 834ZM813 1073L807 1074L802 1068L796 1059L796 1054L802 1058L806 1063L812 1069ZM721 1111L711 1111L695 1099L696 1090L704 1089L716 1101ZM1005 778L1000 777L992 764L992 755L999 762L1006 775ZM885 960L881 955L875 949L873 931L878 935L883 940L890 961ZM1012 1243L1006 1236L1000 1221L1005 1219L1014 1235ZM797 908L792 906L785 892L783 885L789 887L794 894L799 904ZM642 1205L634 1201L628 1194L631 1194L641 1200ZM706 807L704 807L699 800L699 796L701 794L704 799L706 803ZM643 1174L639 1175L631 1173L621 1168L615 1161L619 1160L634 1165L647 1173ZM763 970L751 967L744 950L745 943L758 958ZM776 817L772 817L766 814L765 809L771 809L774 813ZM807 812L801 815L796 808L798 805L805 805ZM861 1094L848 1092L838 1080L837 1064L848 1068L861 1076ZM978 1086L976 1085L968 1078L968 1069L971 1066L979 1074L982 1082ZM636 1101L629 1103L620 1091L620 1083L630 1083L636 1094ZM961 818L957 819L953 816L951 811L955 810L963 815ZM625 771L619 771L616 761L619 758L626 766ZM676 1237L671 1238L665 1236L662 1234L660 1228L665 1227L670 1231L675 1232ZM846 1244L843 1244L834 1238L831 1230L835 1231L848 1240ZM843 898L836 903L828 896L823 879L823 870L833 875L842 878L847 896ZM646 1167L640 1165L632 1156L623 1144L627 1140L637 1146L642 1155ZM1012 942L1009 943L1005 937L1006 930L1010 933L1013 940ZM657 981L641 979L630 974L632 965L651 971ZM972 1079L957 1082L947 1077L933 1069L945 1060L950 1060L970 1066ZM974 1173L971 1175L968 1170L965 1165L967 1164L970 1164L973 1167L975 1170ZM894 761L886 765L864 756L865 750L871 751L889 757ZM702 818L698 818L691 806L690 800L697 803L701 809ZM739 1205L735 1208L724 1202L724 1200L727 1197L734 1200ZM947 1245L942 1246L938 1241L935 1237L937 1234L944 1236L946 1239ZM858 1180L842 1177L836 1161L833 1149L848 1150L858 1164ZM756 1176L750 1181L732 1175L722 1170L723 1164L730 1159L736 1163L752 1169ZM982 1161L973 1153L965 1139L960 1127L970 1126L977 1131L982 1147ZM646 1107L644 1107L638 1100L635 1097L635 1094L636 1093L640 1096L644 1103ZM838 1132L834 1128L831 1123L830 1120L832 1114L837 1117L839 1124L840 1127ZM741 837L733 833L727 816L728 806L743 829ZM876 1164L867 1169L857 1162L848 1155L848 1148L856 1144L868 1151ZM1006 1225L993 1220L985 1206L980 1194L989 1199L1002 1215ZM767 1030L763 1031L755 1029L752 1023L747 1017L753 1016L762 1020L767 1027ZM923 835L916 835L909 826L914 822L921 828ZM665 866L654 856L648 839L657 843L663 855ZM920 1052L915 1051L906 1046L905 1041L905 1033L912 1032L917 1034L924 1049ZM741 1030L728 1031L707 1014L709 1009L723 1013L731 1016ZM810 1225L803 1222L795 1208L797 1203L798 1195L805 1197L814 1212L813 1219ZM861 1257L857 1256L850 1247L851 1240L859 1243L863 1254ZM822 1165L814 1166L809 1156L810 1150L820 1155ZM615 917L601 916L589 896L592 891L602 894L613 905ZM621 799L623 805L607 796L601 785L601 779L609 776L616 781L622 791ZM976 1053L965 1051L954 1043L953 1027L962 1025L975 1047ZM892 1097L884 1096L876 1091L867 1082L867 1079L875 1080L884 1083L890 1091ZM835 952L833 953L825 947L819 938L818 933L829 941L836 946ZM761 1237L752 1236L748 1229L749 1222L754 1222L761 1227ZM887 812L875 806L868 791L877 783L886 797ZM841 934L834 937L826 935L818 928L819 923L832 927L840 930ZM889 1203L885 1202L880 1200L880 1197L879 1196L881 1194L885 1197L888 1199ZM686 1178L676 1177L667 1175L659 1166L661 1161L671 1160L674 1163L685 1172ZM983 968L970 968L960 954L964 942L977 948L986 955ZM786 1026L774 1012L764 996L770 992L783 1011ZM749 807L747 808L738 800L735 791L736 786L739 787L748 796L750 803ZM877 1058L871 1054L866 1041L870 1039L880 1052ZM792 1040L791 1041L778 1038L776 1036L775 1032L779 1030L787 1031L793 1035ZM875 879L875 880L864 878L861 876L858 871L862 872L870 874L874 876ZM759 1175L755 1172L751 1168L747 1163L747 1160L747 1158L752 1163L756 1169ZM904 762L901 769L889 752L882 748L884 735L895 741L907 749L909 759ZM830 1021L822 1017L816 1009L816 1000L823 999L830 1010ZM735 929L732 931L717 923L712 920L709 915L718 915L727 919L739 927ZM691 1099L677 1093L663 1076L667 1074L685 1085ZM1007 1080L997 1078L987 1072L975 1058L977 1055L983 1047L993 1058L1004 1066ZM642 1252L638 1252L632 1243L631 1240L632 1235L637 1243L640 1247ZM830 1158L827 1160L820 1153L821 1148L822 1146L830 1149L832 1155ZM857 883L852 889L830 882L830 877L824 861L833 861L844 862L860 876ZM856 799L848 791L843 779L848 780L854 789ZM710 1198L701 1196L693 1185L694 1172L700 1176L714 1194ZM932 1078L919 1073L906 1065L904 1057L913 1058L924 1066ZM757 929L744 923L722 907L723 900L737 898L748 913ZM899 890L893 884L885 864L894 861L904 877ZM644 1004L631 999L616 990L621 983L634 991ZM704 781L704 782L699 780L694 777L695 776L698 776L704 779ZM958 1154L956 1156L950 1150L949 1146L951 1142L953 1143L956 1145L959 1150ZM784 1031L773 1028L769 1024L763 1010L769 1007L776 1012L781 1022ZM849 810L828 812L819 806L810 793L823 787L845 797ZM974 1190L963 1192L945 1175L941 1167L950 1165L966 1174ZM983 1095L979 1093L974 1091L969 1086L966 1079L968 1078L975 1083L983 1089ZM974 892L962 894L945 889L946 881L946 869L959 878L970 886ZM783 832L774 827L769 815L766 803L778 806L792 829ZM965 1245L961 1243L959 1238L961 1236L964 1241ZM807 828L798 822L791 812L790 806L801 811L804 819ZM898 762L889 762L879 756L883 750L896 754ZM967 1116L960 1114L952 1106L948 1099L955 1101L964 1109ZM690 825L675 815L671 796L681 793L692 811ZM745 1030L739 1030L733 1026L732 1020L734 1010L741 1016L748 1022L749 1027ZM841 1255L835 1254L829 1249L828 1244L835 1245L837 1248ZM949 1163L942 1162L936 1157L936 1154L943 1157ZM910 842L907 843L899 840L891 836L890 833L894 832L900 834L908 840ZM865 1188L861 1184L855 1178L855 1173L858 1173L863 1178L868 1184ZM952 1046L948 1043L945 1034L947 1033L952 1041ZM956 966L949 966L941 964L935 953L935 950L942 950L951 954L953 957ZM956 862L950 866L940 863L934 852L939 851L948 853L957 859ZM713 913L710 914L704 910L702 905L700 899L708 899L711 904L715 911ZM802 1109L790 1111L775 1102L777 1093L795 1099ZM1000 986L988 983L969 965L973 958L991 973ZM885 902L879 902L873 900L868 892L874 892L886 897ZM660 843L655 839L649 830L648 819L650 815L658 825L663 834ZM893 854L891 856L880 850L879 847L877 844L880 843L885 846L891 852ZM825 801L821 798L819 794L818 788L821 789L825 797ZM761 818L748 818L744 809L740 800L742 793L748 792L757 798L759 808ZM997 925L988 927L974 918L974 906L986 907L1000 913ZM722 1040L710 1038L701 1022L708 1013L720 1018L726 1028ZM771 1013L762 1016L757 1012L749 1003L756 1002L770 1007ZM748 1159L744 1162L738 1161L727 1156L725 1151L734 1146L740 1150L749 1155ZM823 919L818 920L811 915L812 910L819 914ZM951 1238L934 1231L925 1216L929 1198L940 1200L950 1225ZM953 872L945 870L941 869L936 864L937 862L942 862L947 863L953 868ZM779 912L775 910L772 906L769 895L771 895L774 893L780 900L779 908ZM893 779L881 778L868 768L861 758L874 759L889 769ZM669 1020L667 1018L664 1013L663 1009L663 1007L666 1009L668 1013L669 1016ZM731 1119L720 1117L712 1099L725 1091L736 1104ZM982 1125L970 1122L954 1110L956 1106L961 1105L974 1117ZM933 770L927 772L916 770L909 763L901 756L906 754L916 757L929 764ZM992 1057L975 1058L958 1041L959 1032L967 1028L982 1043ZM990 1065L985 1069L973 1063L970 1060L972 1054L982 1056L987 1060ZM614 1026L611 1028L596 1015L592 1006L597 1005L609 1009L616 1022ZM932 958L921 962L915 959L899 945L904 938L911 931L919 940L931 950ZM789 870L774 866L763 850L767 841L780 845L788 856ZM896 1066L891 1062L884 1056L884 1053L885 1050L891 1055L895 1060ZM800 1017L784 1013L770 993L775 985L793 997ZM702 1174L690 1177L673 1172L671 1163L680 1160L696 1164ZM1015 1171L1003 1163L999 1135L1005 1133L1014 1151ZM919 802L911 798L903 784L900 772L911 782L919 793ZM952 1082L944 1079L930 1067L934 1062L943 1060L954 1072ZM762 1201L754 1198L744 1193L741 1188L737 1182L751 1188L759 1197ZM919 949L901 950L880 938L885 930L907 934ZM982 1184L977 1188L968 1181L968 1171L974 1171L984 1181ZM926 1044L912 1045L904 1040L896 1027L911 1023L920 1029ZM915 869L912 871L895 861L889 850L903 850L913 860ZM613 1134L606 1133L601 1127L602 1121L607 1124L612 1130ZM841 1072L831 1066L824 1060L821 1046L825 1040L837 1049L839 1061ZM816 1094L812 1092L809 1084L812 1084L815 1088ZM883 1143L877 1139L875 1128L876 1125L882 1130L884 1138ZM999 978L993 979L977 970L972 964L976 959L985 962L994 970ZM751 1028L742 1027L732 1024L730 1018L736 1013L745 1018ZM873 1034L860 1026L857 1006L861 997L876 1023ZM678 1230L668 1229L659 1220L663 1219L671 1221ZM645 1121L635 1121L620 1111L626 1109L637 1113ZM680 1255L671 1255L657 1246L658 1237L661 1234L677 1239L686 1248ZM874 846L871 845L870 842L867 833L868 833L870 834L873 841L875 844ZM961 1211L956 1209L952 1199L957 1196L962 1203ZM949 870L947 871L940 869L939 867L938 865L940 864L943 865L948 868ZM702 1070L689 1067L674 1049L678 1043L703 1055ZM912 793L904 793L895 790L886 781L891 779L896 780L910 789ZM665 939L655 937L647 931L655 926L661 929ZM787 827L781 828L774 818L777 811L786 819ZM863 879L854 867L851 863L846 846L850 844L856 850L862 859L863 869ZM766 888L763 890L752 881L745 871L758 875L766 882ZM674 1130L674 1132L659 1135L645 1120L640 1112L654 1109L665 1115L677 1120ZM854 1159L842 1165L822 1145L827 1134L850 1141ZM899 787L886 786L875 772L875 766L895 780ZM1003 1031L999 1029L996 1023L992 1015L994 1013L999 1017L1004 1024ZM995 1047L986 1046L981 1039L979 1032L986 1033L993 1037ZM934 945L913 943L905 934L904 922L920 930ZM617 847L608 843L601 839L590 832L590 829L599 830L613 841ZM991 886L986 886L979 885L969 878L972 877L979 879L984 881ZM633 994L631 991L627 987L627 984L627 981L629 982L631 984L634 990ZM619 1121L616 1119L610 1113L608 1110L606 1103L611 1105L616 1112L619 1116ZM629 1060L624 1058L619 1054L617 1048L622 1051L625 1055ZM878 1075L869 1066L864 1057L864 1050L869 1056L875 1066ZM991 831L977 826L962 806L974 805L986 814ZM1003 780L994 781L988 775L987 768L1001 773ZM972 995L966 987L961 981L960 972L958 963L962 965L968 977L971 985ZM1023 834L1014 832L1002 829L992 818L995 817L1010 820L1020 824ZM1003 908L991 909L978 900L977 891L981 889L995 899ZM1052 1006L1047 1006L1041 1001L1043 999L1047 998L1052 1003ZM1024 1192L1020 1191L1015 1188L1011 1184L1010 1180L1012 1181L1018 1183L1022 1187ZM1109 1233L1105 1232L1103 1229L1101 1222L1105 1222L1106 1223L1109 1227L1111 1230ZM1128 1088L1123 1087L1119 1085L1111 1074L1115 1073L1120 1070L1125 1073L1130 1085ZM1068 1114L1061 1113L1054 1109L1047 1100L1048 1096L1054 1101L1066 1108ZM1028 1039L1024 1037L1020 1033L1020 1031L1022 1032L1026 1035ZM1068 799L1066 798L1064 796L1064 792L1065 793L1068 797ZM1120 967L1111 966L1105 962L1103 958L1114 959ZM1137 870L1134 870L1126 866L1121 860L1121 853L1131 858L1136 866ZM1084 827L1081 825L1078 819L1078 816L1083 823ZM1114 1122L1113 1121L1109 1115L1107 1110L1109 1108L1112 1108L1115 1111L1116 1117ZM1090 898L1088 898L1085 894L1086 889L1088 889L1090 890L1092 896ZM1015 1153L1011 1152L1009 1148L1011 1147L1015 1150ZM1040 785L1035 780L1033 774L1035 772L1041 780ZM1025 1194L1020 1193L1017 1180L1021 1179L1026 1186ZM1127 851L1124 854L1121 851L1120 849L1118 846L1120 845L1125 847L1128 850ZM1086 981L1087 985L1076 980L1072 974L1070 969L1077 968L1086 973L1088 977ZM1039 946L1036 948L1025 937L1024 931L1032 936L1038 942ZM1095 837L1086 836L1076 828L1076 822L1088 829ZM1086 823L1083 824L1078 818L1074 814L1075 811L1079 811L1086 815L1086 821ZM1083 1165L1078 1159L1073 1154L1072 1150L1074 1143L1079 1148L1084 1154L1085 1158ZM1066 767L1062 766L1059 762L1061 759L1065 761L1067 763ZM886 958L880 970L859 945L858 927L865 910L878 926L889 950ZM824 1037L813 1035L802 1021L796 1007L812 1009L827 1023ZM975 1107L965 1109L955 1095L962 1090L973 1094ZM879 1135L866 1136L851 1114L849 1105L853 1091L872 1103L876 1117ZM840 1087L809 1082L801 1066L800 1056L830 1069ZM937 893L927 901L911 887L908 867L926 871L939 889ZM976 916L957 918L949 916L929 901L935 890L953 892L975 905ZM928 952L918 946L911 931L915 931L924 941ZM989 980L977 979L953 975L947 972L949 962L959 959L967 958L986 973ZM828 1167L816 1165L806 1159L808 1150L820 1151L829 1161ZM981 993L975 991L968 983L968 978L970 978L978 986ZM962 1260L950 1254L945 1247L941 1236L951 1239L960 1253ZM837 1227L835 1235L824 1231L800 1218L799 1211L803 1209L822 1214L839 1225ZM850 1193L851 1201L828 1195L821 1190L825 1179L827 1173L837 1179L855 1186ZM1028 1026L1014 1017L1008 1009L1003 986L1006 973L1020 980L1031 988L1036 1010ZM956 967L953 970L940 952L935 941L934 927L942 931L950 942L957 956ZM902 1174L891 1174L878 1166L867 1157L860 1145L866 1142L886 1156L892 1162ZM989 1160L985 1165L967 1156L965 1152L956 1139L967 1143L980 1148L985 1153ZM820 1048L810 1046L804 1034L806 1026L817 1032ZM989 1016L971 1014L942 996L952 988L985 999ZM843 1097L838 1104L823 1105L808 1097L803 1083L813 1077L829 1083L849 1093ZM879 1175L873 1181L854 1182L841 1174L840 1155L850 1150L867 1159L880 1168ZM828 1226L823 1227L815 1220L805 1210L806 1206L811 1208L816 1211L824 1220ZM832 1249L824 1244L814 1239L810 1226L814 1223L820 1228L826 1237ZM988 952L968 960L949 955L939 945L927 927L936 922L955 924L974 935ZM878 1093L872 1097L857 1078L860 1071L870 1077L878 1083ZM913 1094L904 1086L902 1073L908 1075L915 1089ZM811 1224L799 1219L793 1211L793 1199L806 1200L814 1209ZM873 1254L859 1236L851 1231L839 1205L853 1194L867 1194L875 1213L882 1236ZM989 1240L983 1237L974 1222L977 1214L984 1217L992 1237ZM964 1043L956 1038L950 1027L947 1017L948 1015L957 1020L960 1025L965 1035ZM1008 1013L987 1010L968 996L963 977L984 977L1004 993ZM1021 960L1011 958L1002 951L1002 941L1009 943L1018 953ZM831 1263L815 1250L809 1226L819 1219L834 1244ZM832 1135L811 1123L801 1110L808 1104L820 1116ZM1010 972L1001 973L994 963L990 954L1000 951L1014 963ZM861 1055L848 1049L834 1038L836 1024L837 1021L853 1016L863 1034L866 1040ZM1006 1048L1001 1047L989 1036L988 1031L997 1032L1003 1039ZM882 1113L873 1112L868 1103L857 1085L861 1084L877 1098L883 1109ZM973 1221L970 1225L960 1217L953 1206L954 1202L958 1203L967 1206L972 1213ZM976 991L971 992L964 987L957 974L959 970L966 971L975 982ZM972 899L957 895L943 878L948 875L968 891ZM938 1015L931 1020L919 999L910 972L921 972L930 980L939 991L946 1013ZM929 928L916 926L903 919L891 905L899 897L917 910L929 921ZM864 1267L842 1265L828 1237L834 1228L859 1243ZM850 1136L843 1137L831 1118L828 1107L833 1102L843 1101L852 1117L855 1130ZM861 1177L852 1176L833 1149L836 1141L847 1138L866 1148L874 1164ZM926 949L915 946L903 936L897 921L911 919L925 929L926 936ZM836 1150L827 1152L807 1145L801 1134L805 1125L822 1134L840 1143ZM908 1026L901 1016L896 1008L897 999L898 992L906 1007L910 1019ZM1209 1136L1213 1141L1200 1157L1196 1152L1201 1138ZM1118 1193L1114 1199L1103 1205L1102 1200L1114 1191ZM1169 1095L1166 1107L1162 1111L1158 1111L1161 1099ZM1200 1233L1198 1244L1180 1257L1177 1251L1186 1234ZM1136 1148L1135 1155L1131 1162L1127 1162L1125 1160L1125 1156L1132 1150ZM1165 1224L1162 1239L1152 1249L1140 1244L1149 1231ZM1191 1077L1187 1090L1179 1096L1167 1097L1171 1087L1184 1075ZM1208 1232L1211 1239L1207 1244L1199 1251L1199 1247L1201 1239L1206 1232ZM1203 1119L1199 1124L1192 1128L1192 1123L1200 1117ZM1096 1044L1101 1057L1095 1071L1081 1073L1077 1064L1085 1047ZM1110 1099L1103 1108L1091 1116L1089 1114L1088 1110L1102 1100ZM1078 1073L1079 1082L1075 1089L1066 1092L1071 1075ZM1132 1085L1132 1090L1128 1100L1121 1108L1117 1109L1115 1102L1119 1096L1128 1083ZM1142 1151L1141 1167L1133 1177L1124 1177L1135 1158ZM1183 1153L1183 1160L1173 1176L1163 1181L1165 1171L1174 1158ZM1178 1212L1182 1216L1181 1228L1179 1236L1171 1234L1168 1229L1168 1225L1172 1213ZM1264 773L1263 776L1260 778L1257 781L1255 780L1254 779L1258 775L1260 773ZM1373 948L1374 951L1372 955L1370 958L1369 955L1371 949ZM1237 760L1238 768L1233 773L1230 769L1233 764ZM1176 919L1177 924L1175 930L1171 939L1167 937L1165 927L1170 922ZM1213 920L1212 925L1209 928L1207 930L1205 931L1204 928L1204 925L1209 920ZM1311 753L1309 759L1301 768L1299 764L1305 756ZM1193 965L1194 973L1192 981L1189 985L1187 985L1186 978L1190 966ZM1231 931L1233 938L1227 944L1222 942L1225 934ZM1485 780L1486 784L1483 788L1479 788L1478 786L1481 781ZM1316 974L1314 976L1309 981L1305 981L1306 979L1310 975ZM1283 990L1286 992L1283 999L1281 1000L1279 1000L1279 996L1280 993ZM1424 794L1422 800L1419 805L1414 809L1412 811L1411 808L1417 800L1422 795ZM1413 755L1413 760L1408 763L1403 766L1398 766L1400 762L1404 757L1410 756ZM1172 878L1172 882L1171 884L1162 888L1163 885L1165 878L1169 877ZM1279 982L1279 987L1277 990L1275 989L1276 984ZM1457 865L1458 874L1452 885L1449 880L1450 875ZM1246 778L1242 781L1240 783L1236 784L1233 784L1235 782L1238 780L1243 777ZM1402 856L1402 860L1399 864L1396 864L1395 861L1397 857ZM1263 845L1262 848L1255 851L1251 850L1257 846ZM1397 965L1397 968L1387 974L1383 971L1384 964L1392 963ZM1348 989L1350 996L1344 1005L1340 1001L1342 994ZM1129 849L1126 854L1120 858L1116 855L1119 849L1123 847Z" fill="#d3e7cf" filter="url(#soft)"/>
<path d="M676 905l22-14 20 6 10 16-14 18-26 12-22-6-6-14z" fill="#cde5c8"/>
<path d="M682 918l16-6 12-16 8 2-8 18-14 14-18 6-4-6z" fill="#aacdf0"/>
<path d="M364 876l8 2 6-4 2 6-6 10-8 0-4-8z" fill="#aacdf0"/>
<path d="M353 1086l6-2 3 5-2 7-6 2-3-6z" fill="#aacdf0"/>
<ellipse cx="918" cy="1118" rx="17" ry="8" fill="#aacdf0" transform="rotate(12 918 1118)"/>
<polygon points="1092,748 1500,748 1500,880 1497,902 1465,920 1440,937 1424,960 1406,982 1388,1005 1378,1022 1374,1054 1362,1077 1335,1110 1315,1140 1290,1172 1280,1202 1260,1240 1257,1250 1185,1250 1150,1200 1170,1150 1205,1100 1180,1060 1130,1075 1105,1050 1120,1010 1180,985 1150,950 1105,915 1085,870 1100,820 1085,780" fill="url(#pUrbW)"/>
<polygon points="1092,748 1500,748 1500,880 1497,902 1465,920 1440,937 1424,960 1406,982 1388,1005 1378,1022 1374,1054 1362,1077 1335,1110 1315,1140 1290,1172 1280,1202 1260,1240 1257,1250 1185,1250 1150,1200 1170,1150 1205,1100 1180,1060 1130,1075 1105,1050 1120,1010 1180,985 1150,950 1105,915 1085,870 1100,820 1085,780" fill="url(#pUrbW2)"/>
<polygon points="1440,748 1778,748 1768,757 1758,767 1748,775 1740,783 1732,791 1720,803 1708,811 1696,821 1686,831 1678,839 1666,847 1656,857 1646,867 1640,860 1620,856 1600,863 1580,868 1560,869 1548,867 1532,864 1516,867 1506,875 1500,885 1496,901 1488,911 1470,919 1440,937 1430,900 1425,850" fill="url(#pUrbT)"/>
<polygon points="1038,826 1070,812 1100,822 1112,850 1095,878 1060,884 1036,862" fill="url(#pUrbG)"/>
<polygon points="1040,1018 1075,1004 1110,1015 1122,1045 1105,1075 1065,1082 1038,1058" fill="url(#pUrbG)"/>
<polygon points="368,1032 420,1026 470,1046 520,1070 560,1105 590,1160 602,1210 575,1250 425,1250 395,1215 362,1195 335,1160 328,1115 340,1075 352,1048" fill="url(#pUrbK)"/>
<polygon points="600,1010 640,985 690,975 730,985 765,1010 790,1040 775,1075 740,1095 700,1100 660,1085 620,1060 595,1035" fill="url(#pUrbG)"/>
<path d="M1216 1016L1214 1022L1209 1026L1205 1023L1209 1017ZM1209 821L1213 827L1208 840L1203 841L1204 829ZM1283 1104L1288 1104L1286 1112L1283 1116L1279 1115L1278 1109L1281 1102ZM1191 1164L1188 1172L1182 1181L1176 1180L1172 1176L1180 1168ZM1283 809L1282 814L1280 818L1277 824L1271 821L1274 817L1278 809ZM1252 929L1253 931L1251 935L1249 937L1247 937L1246 934L1248 932L1249 929ZM1366 785L1366 788L1360 792L1356 795L1353 793L1357 788L1364 782ZM1224 1136L1222 1139L1220 1141L1217 1139L1217 1137L1222 1135ZM1451 838L1452 840L1447 844L1441 846L1439 845L1439 842L1444 839L1449 837ZM1297 1060L1300 1062L1299 1066L1297 1071L1296 1071L1293 1067L1294 1064L1296 1061ZM1233 1146L1231 1149L1228 1151L1226 1152L1226 1149L1230 1146ZM1255 877L1254 882L1251 884L1244 886L1242 883L1246 879L1253 876ZM1358 1008L1358 1009L1353 1012L1351 1010L1355 1008ZM1272 945L1270 947L1268 948L1264 950L1262 949L1263 946L1266 945L1270 944ZM1284 1089L1283 1092L1277 1099L1274 1097L1278 1091ZM1267 810L1266 813L1259 816L1257 814L1263 809ZM1132 811L1134 814L1131 818L1127 823L1126 820L1125 815L1129 812ZM1220 1049L1219 1054L1220 1057L1212 1065L1210 1063L1208 1060L1213 1054L1216 1048ZM1189 995L1187 1000L1178 1004L1174 1002L1177 997L1184 995ZM1244 881L1244 885L1236 894L1229 896L1232 889L1238 883ZM1301 868L1301 870L1298 874L1292 874L1293 871L1298 867ZM1399 797L1399 800L1399 803L1397 805L1394 804L1394 802L1397 798ZM1289 966L1289 968L1285 975L1281 975L1280 973L1281 970L1286 965ZM1150 894L1147 902L1141 906L1136 908L1137 901L1144 896ZM1242 842L1243 844L1241 846L1237 848L1236 847L1235 845L1238 843L1240 842ZM1227 805L1225 808L1221 810L1218 811L1220 807L1223 806ZM1237 1161L1237 1164L1231 1167L1226 1168L1225 1166L1227 1164L1234 1160ZM1319 977L1321 979L1321 981L1319 984L1318 986L1317 983L1317 981L1318 977ZM1153 1156L1153 1158L1152 1166L1150 1171L1147 1172L1148 1163L1150 1159ZM1448 855L1448 856L1444 862L1442 864L1438 866L1440 863L1443 858L1444 857ZM1346 998L1348 998L1345 1004L1341 1006L1338 1006L1338 1003L1339 1001L1344 997ZM1254 815L1254 817L1254 819L1251 823L1250 823L1249 822L1249 819L1251 817ZM1309 847L1309 850L1305 853L1299 855L1298 853L1298 851L1302 848L1307 847ZM1262 840L1263 844L1258 853L1254 854L1251 857L1252 850L1254 845L1257 842ZM1695 764L1690 759L1690 755L1692 751L1695 757ZM1528 767L1525 762L1524 757L1525 756L1528 757L1530 762ZM1579 843L1576 842L1574 842L1572 836L1574 833L1576 832L1580 838L1581 843ZM1585 817L1582 813L1581 809L1583 806L1585 811ZM1666 793L1662 792L1661 784L1664 783L1669 787ZM1603 852L1600 852L1597 845L1598 841L1597 838L1601 839L1603 844L1604 849ZM476 1112L475 1118L473 1120L466 1122L463 1122L467 1114L473 1110ZM483 1241L483 1245L481 1247L477 1247L475 1248L478 1244L480 1242ZM547 1137L547 1139L543 1145L538 1148L535 1145L535 1140L543 1135ZM396 1129L393 1133L387 1140L383 1139L385 1134L389 1131ZM523 1218L523 1225L518 1228L512 1231L510 1230L510 1225L513 1221L517 1220ZM445 1149L444 1155L437 1159L435 1159L435 1153L439 1149ZM576 1065L577 1070L573 1073L567 1076L566 1072L567 1070L571 1066ZM512 1155L511 1157L510 1159L507 1162L505 1161L506 1158L506 1157L509 1156ZM486 1097L485 1102L477 1108L476 1104L479 1100ZM421 1170L421 1173L418 1175L413 1177L415 1173L418 1170ZM457 1226L457 1228L455 1231L451 1230L452 1228L455 1225ZM564 1132L563 1137L560 1140L556 1140L554 1138L556 1136L560 1133ZM591 1125L591 1130L582 1136L580 1131L585 1125ZM452 1162L452 1164L450 1168L445 1170L445 1168L446 1165L446 1164L450 1162Z" fill="#d0e6cc" filter="url(#soft)"/>
<!-- water -->
<polygon points="1778,748 1768,757 1758,767 1748,775 1740,783 1732,791 1720,803 1708,811 1696,821 1686,831 1678,839 1666,847 1656,857 1646,867 1640,860 1620,856 1600,863 1580,868 1560,869 1548,867 1532,864 1516,867 1506,875 1500,885 1496,901 1488,911 1470,919 1452,929 1440,937 1432,950 1424,960 1415,970 1406,982 1397,992 1388,1005 1378,1022 1376,1040 1374,1054 1362,1077 1348,1094 1335,1110 1324,1126 1315,1140 1302,1156 1290,1172 1284,1188 1280,1202 1270,1222 1260,1240 1257,1250 1999,1250 1999,748" fill="#b1d8f8"/>
<path d="M1584 877L1594 873L1600 885L1606 893L1618 885L1630 875L1638 869L1641 873L1628 886L1612 897L1600 900L1596 895L1590 885Z" fill="#eceee9"/>
<path d="M1598 886l6 9 8-4-2-4zM1622 884l8-8 3 2-8 8z" fill="#d6e8d4"/>
<path d="M1668 846L1665 862L1667 874L1657 885L1647 895L1644 891L1654 880L1660 868L1661 852Z" fill="#c3dfe2" opacity=".8"/>
<!-- highways -->
<g fill="none" stroke="#f5d98c" stroke-linejoin="round" stroke-linecap="round"><path d="M67 787 L110 812 L160 838 L214 870 L262 898 L300 918 L325 930 L330 940 L328 947 L340 952 L372 953 L376 965 L382 985 L386 1010 L390 1050 L400 1062 L420 1075 L438 1085 L450 1099 L465 1102 L468 1112 L469 1121 L472 1130 L478 1150" stroke-width="3.568"/><path d="M218 1250 L235 1235 L252 1222 L280 1212 L310 1206 L350 1198 L385 1191 L420 1180 L455 1167 L492 1172 L520 1182 L545 1190 L565 1197 L602 1220 L622 1250" stroke-width="4.308"/><path d="M467 1114 L490 1106 L518 1094 L545 1076 L569 1058 L595 1038 L620 1019 L635 1005 L650 990" stroke-width="3.716"/><path d="M535 1179 L580 1183 L620 1183" stroke-width="3.42"/><path d="M399 1185 L425 1175 L450 1165 L462 1161" stroke-width="3.42"/><path d="M545 750 L570 770 L590 790 L600 810 L605 822 L618 845 L628 865 L632 880 L634 900 L636 930 L650 950 L668 965 L660 980 L650 990 L642 1000" stroke-width="3.568"/><path d="M842 750 L822 777 L805 795 L790 812 L770 838 L752 860 L740 875 L736 890 L722 910 L712 925 L705 942 L700 965 L698 990 L696 1010" stroke-width="3.568"/><path d="M822 777 L840 795 L862 817 L885 843 L905 862 L912 870" stroke-width="3.568"/><path d="M696 1010 L712 990 L730 982 L755 955 L780 925 L800 902 L815 897 L826 906 L837 915 L850 900 L867 877 L885 872 L912 870 L925 866 L937 860 L950 842 L962 825 L970 815 L982 808 L995 822 L1010 840 L1025 838 L1045 832 L1070 850 L1085 862" stroke-width="3.716"/><path d="M650 990 L665 1005 L682 1025 L700 1038 L715 1047 L730 1067 L745 1082 L760 1097 L768 1108 L772 1122 L775 1136" stroke-width="3.568"/><path d="M682 1025 L681 1045 L672 1062 L660 1077 L648 1092 L640 1104 L636 1120 L634 1135 L625 1150 L616 1166 L615 1182 L618 1200 L622 1225 L628 1250" stroke-width="3.568"/><path d="M540 1215 L565 1200 L590 1186 L620 1183 L647 1182 L680 1166 L715 1150 L752 1141 L790 1134 L822 1126 L852 1117 L872 1110 L890 1104 L915 1099 L940 1095 L958 1085 L977 1070 L990 1065 L1002 1062 L1010 1050 L1015 1040 L1028 1032 L1040 1027 L1060 1020 L1078 1012 L1092 1004 L1108 994 L1120 985 L1135 968 L1150 950 L1160 935 L1170 925 L1188 918 L1205 915 L1240 903 L1276 885 L1300 869 L1336 849 L1360 833 L1384 819 L1400 812 L1412 797 L1420 785 L1426 768 L1434 758 L1450 753 L1470 751 L1482 756 L1500 752 L1520 748" stroke-width="4.9"/><path d="M540 1215 L520 1228 L500 1240 L488 1250" stroke-width="3.716"/><path d="M847 1146 L868 1160 L890 1175 L903 1186 L915 1197 L930 1212 L945 1230 L965 1250" stroke-width="3.568"/><path d="M1216 748 L1228 762 L1240 775 L1254 790 L1266 803 L1274 817 L1286 830 L1300 843 L1302 853 L1304 865 L1314 878 L1327 890 L1338 896 L1343 903 L1340 913 L1335 920 L1325 930 L1315 940 L1302 953 L1290 965 L1277 982 L1266 998 L1256 1008 L1248 1020 L1238 1030 L1228 1045 L1222 1060 L1218 1072" stroke-width="4.16"/><path d="M1300 748 L1298 757 L1293 772 L1288 785 L1280 805 L1270 825 L1256 843 L1240 859 L1230 870 L1220 881 L1208 893 L1200 900 L1180 912 L1160 930 L1150 945 L1140 960 L1128 975 L1115 990 L1100 1010 L1085 1035 L1075 1060 L1080 1090 L1100 1105 L1130 1112 L1160 1118 L1178 1128 L1176 1148 L1162 1165 L1146 1190 L1136 1215 L1134 1250" stroke-width="4.16"/><path d="M1108 850 L1125 838 L1140 822 L1152 807 L1165 790 L1175 777 L1183 762 L1190 748" stroke-width="3.42"/><path d="M1168 748 L1192 771 L1220 799 L1252 831 L1280 859 L1300 877 L1320 901 L1340 925 L1360 948 L1378 968 L1392 984" stroke-width="3.42"/><path d="M1150 890 L1180 868 L1210 845 L1240 822 L1262 800 L1282 780 L1300 762" stroke-width="3.272"/><path d="M1225 948 L1250 928 L1275 905 L1300 885 L1327 866 L1352 852" stroke-width="3.272"/><path d="M1180 990 L1205 972 L1230 952 L1255 935 L1285 912 L1310 895" stroke-width="3.272"/><path d="M1358 748 L1366 765 L1376 782 L1384 795 L1394 811" stroke-width="3.42"/><path d="M1380 748 L1388 775 L1396 801" stroke-width="3.272"/><path d="M1336 885 L1346 897 L1342 908 L1336 918 L1330 931" stroke-width="3.124"/><path d="M1400 812 L1404 813 L1412 841 L1418 857 L1424 880 L1430 900 L1440 915 L1455 922" stroke-width="3.864"/><path d="M1556 868 L1540 864 L1528 862 L1514 867 L1504 876 L1500 884 L1496 897 L1488 906 L1474 912 L1460 919 L1448 928 L1438 940 L1430 950 L1420 960 L1410 970 L1400 980 L1392 990 L1382 1002 L1374 1015 L1368 1030 L1364 1048 L1358 1062 L1348 1076 L1338 1090 L1326 1106 L1312 1124 L1298 1142 L1285 1160 L1272 1178 L1262 1195 L1250 1212 L1240 1230 L1230 1250" stroke-width="4.16"/><path d="M1302 1040 L1303 1060 L1302 1080 L1300 1100 L1290 1120 L1280 1135 L1265 1150 L1252 1168 L1240 1187 L1226 1205 L1212 1225 L1196 1250" stroke-width="3.864"/><path d="M1218 1072 L1215 1090 L1222 1105" stroke-width="3.42"/><path d="M1556 868 L1572 866 L1590 863 L1608 858 L1624 854 L1636 849" stroke-width="3.864"/><path d="M1420 911 L1436 901 L1460 897 L1486 903 L1496 905" stroke-width="3.568"/><path d="M1666 748 L1667 757 L1660 767 L1650 773 L1636 777 L1630 783 L1628 795 L1629 805 L1632 817 L1636 833 L1638 849" stroke-width="3.568"/><path d="M1540 748 L1544 762 L1548 775" stroke-width="3.272"/><path d="M1748 753 L1744 765 L1732 781 L1716 797 L1700 803 L1686 805 L1684 811" stroke-width="3.42"/><path d="M1077 1010 L1060 1030 L1048 1048 L1040 1060" stroke-width="3.272"/></g>
<g fill="none" stroke="#fce9a8" stroke-linejoin="round" stroke-linecap="round"><path d="M67 787 L110 812 L160 838 L214 870 L262 898 L300 918 L325 930 L330 940 L328 947 L340 952 L372 953 L376 965 L382 985 L386 1010 L390 1050 L400 1062 L420 1075 L438 1085 L450 1099 L465 1102 L468 1112 L469 1121 L472 1130 L478 1150" stroke-width="2.368"/><path d="M218 1250 L235 1235 L252 1222 L280 1212 L310 1206 L350 1198 L385 1191 L420 1180 L455 1167 L492 1172 L520 1182 L545 1190 L565 1197 L602 1220 L622 1250" stroke-width="3.108"/><path d="M467 1114 L490 1106 L518 1094 L545 1076 L569 1058 L595 1038 L620 1019 L635 1005 L650 990" stroke-width="2.516"/><path d="M535 1179 L580 1183 L620 1183" stroke-width="2.22"/><path d="M399 1185 L425 1175 L450 1165 L462 1161" stroke-width="2.22"/><path d="M545 750 L570 770 L590 790 L600 810 L605 822 L618 845 L628 865 L632 880 L634 900 L636 930 L650 950 L668 965 L660 980 L650 990 L642 1000" stroke-width="2.368"/><path d="M842 750 L822 777 L805 795 L790 812 L770 838 L752 860 L740 875 L736 890 L722 910 L712 925 L705 942 L700 965 L698 990 L696 1010" stroke-width="2.368"/><path d="M822 777 L840 795 L862 817 L885 843 L905 862 L912 870" stroke-width="2.368"/><path d="M696 1010 L712 990 L730 982 L755 955 L780 925 L800 902 L815 897 L826 906 L837 915 L850 900 L867 877 L885 872 L912 870 L925 866 L937 860 L950 842 L962 825 L970 815 L982 808 L995 822 L1010 840 L1025 838 L1045 832 L1070 850 L1085 862" stroke-width="2.516"/><path d="M650 990 L665 1005 L682 1025 L700 1038 L715 1047 L730 1067 L745 1082 L760 1097 L768 1108 L772 1122 L775 1136" stroke-width="2.368"/><path d="M682 1025 L681 1045 L672 1062 L660 1077 L648 1092 L640 1104 L636 1120 L634 1135 L625 1150 L616 1166 L615 1182 L618 1200 L622 1225 L628 1250" stroke-width="2.368"/><path d="M540 1215 L565 1200 L590 1186 L620 1183 L647 1182 L680 1166 L715 1150 L752 1141 L790 1134 L822 1126 L852 1117 L872 1110 L890 1104 L915 1099 L940 1095 L958 1085 L977 1070 L990 1065 L1002 1062 L1010 1050 L1015 1040 L1028 1032 L1040 1027 L1060 1020 L1078 1012 L1092 1004 L1108 994 L1120 985 L1135 968 L1150 950 L1160 935 L1170 925 L1188 918 L1205 915 L1240 903 L1276 885 L1300 869 L1336 849 L1360 833 L1384 819 L1400 812 L1412 797 L1420 785 L1426 768 L1434 758 L1450 753 L1470 751 L1482 756 L1500 752 L1520 748" stroke-width="3.7"/><path d="M540 1215 L520 1228 L500 1240 L488 1250" stroke-width="2.516"/><path d="M847 1146 L868 1160 L890 1175 L903 1186 L915 1197 L930 1212 L945 1230 L965 1250" stroke-width="2.368"/><path d="M1216 748 L1228 762 L1240 775 L1254 790 L1266 803 L1274 817 L1286 830 L1300 843 L1302 853 L1304 865 L1314 878 L1327 890 L1338 896 L1343 903 L1340 913 L1335 920 L1325 930 L1315 940 L1302 953 L1290 965 L1277 982 L1266 998 L1256 1008 L1248 1020 L1238 1030 L1228 1045 L1222 1060 L1218 1072" stroke-width="2.96"/><path d="M1300 748 L1298 757 L1293 772 L1288 785 L1280 805 L1270 825 L1256 843 L1240 859 L1230 870 L1220 881 L1208 893 L1200 900 L1180 912 L1160 930 L1150 945 L1140 960 L1128 975 L1115 990 L1100 1010 L1085 1035 L1075 1060 L1080 1090 L1100 1105 L1130 1112 L1160 1118 L1178 1128 L1176 1148 L1162 1165 L1146 1190 L1136 1215 L1134 1250" stroke-width="2.96"/><path d="M1108 850 L1125 838 L1140 822 L1152 807 L1165 790 L1175 777 L1183 762 L1190 748" stroke-width="2.22"/><path d="M1168 748 L1192 771 L1220 799 L1252 831 L1280 859 L1300 877 L1320 901 L1340 925 L1360 948 L1378 968 L1392 984" stroke-width="2.22"/><path d="M1150 890 L1180 868 L1210 845 L1240 822 L1262 800 L1282 780 L1300 762" stroke-width="2.072"/><path d="M1225 948 L1250 928 L1275 905 L1300 885 L1327 866 L1352 852" stroke-width="2.072"/><path d="M1180 990 L1205 972 L1230 952 L1255 935 L1285 912 L1310 895" stroke-width="2.072"/><path d="M1358 748 L1366 765 L1376 782 L1384 795 L1394 811" stroke-width="2.22"/><path d="M1380 748 L1388 775 L1396 801" stroke-width="2.072"/><path d="M1336 885 L1346 897 L1342 908 L1336 918 L1330 931" stroke-width="1.924"/><path d="M1400 812 L1404 813 L1412 841 L1418 857 L1424 880 L1430 900 L1440 915 L1455 922" stroke-width="2.664"/><path d="M1556 868 L1540 864 L1528 862 L1514 867 L1504 876 L1500 884 L1496 897 L1488 906 L1474 912 L1460 919 L1448 928 L1438 940 L1430 950 L1420 960 L1410 970 L1400 980 L1392 990 L1382 1002 L1374 1015 L1368 1030 L1364 1048 L1358 1062 L1348 1076 L1338 1090 L1326 1106 L1312 1124 L1298 1142 L1285 1160 L1272 1178 L1262 1195 L1250 1212 L1240 1230 L1230 1250" stroke-width="2.96"/><path d="M1302 1040 L1303 1060 L1302 1080 L1300 1100 L1290 1120 L1280 1135 L1265 1150 L1252 1168 L1240 1187 L1226 1205 L1212 1225 L1196 1250" stroke-width="2.664"/><path d="M1218 1072 L1215 1090 L1222 1105" stroke-width="2.22"/><path d="M1556 868 L1572 866 L1590 863 L1608 858 L1624 854 L1636 849" stroke-width="2.664"/><path d="M1420 911 L1436 901 L1460 897 L1486 903 L1496 905" stroke-width="2.368"/><path d="M1666 748 L1667 757 L1660 767 L1650 773 L1636 777 L1630 783 L1628 795 L1629 805 L1632 817 L1636 833 L1638 849" stroke-width="2.368"/><path d="M1540 748 L1544 762 L1548 775" stroke-width="2.072"/><path d="M1748 753 L1744 765 L1732 781 L1716 797 L1700 803 L1686 805 L1684 811" stroke-width="2.22"/><path d="M1077 1010 L1060 1030 L1048 1048 L1040 1060" stroke-width="2.072"/></g>
<!-- labels + shields -->
<g font-family="Liberation Sans,Arial,sans-serif" stroke="#fff" stroke-width="3" stroke-linejoin="round" paint-order="stroke" style="paint-order:stroke">
<text x="143.7" y="853.7" font-size="17" fill="#737373" textLength="57.3" lengthAdjust="spacing">Dorking</text>
<text x="253" y="926.5" font-size="17" fill="#737373" textLength="86" lengthAdjust="spacing">Wallenstein</text>
<text x="349" y="924" font-size="17" fill="#737373" textLength="47" lengthAdjust="spacing">Elmira</text>
<text x="167" y="951" font-size="17" fill="#737373" textLength="64" lengthAdjust="spacing">Linwood</text>
<text x="67" y="967.5" font-size="17" fill="#737373" textLength="54" lengthAdjust="spacing">illbank</text>
<text x="342" y="1010" font-size="17" fill="#737373" textLength="80" lengthAdjust="spacing">St. Jacobs</text>
<text x="231" y="1035" font-size="17" fill="#737373" textLength="87" lengthAdjust="spacing">St. Clement</text>
<text x="126" y="1100" font-size="17" fill="#737373" textLength="71.5" lengthAdjust="spacing">Wellesley</text>
<text x="400" y="1138.7" font-size="22.5" fill="#4b4b4b" textLength="92.5" lengthAdjust="spacing">Kitchener</text>
<text x="505" y="1112.5" font-size="17" fill="#737373" textLength="58" lengthAdjust="spacing">Breslau</text>
<text x="238" y="1206" font-size="17" fill="#737373" textLength="47.7" lengthAdjust="spacing">Baden</text>
<text x="163.7" y="1241" font-size="17" fill="#737373" textLength="108.8" lengthAdjust="spacing">New Hamburg</text>
<text x="540" y="771" font-size="17" fill="#737373" textLength="52" lengthAdjust="spacing">Fergus</text>
<text x="492" y="803" font-size="17" fill="#737373" textLength="38" lengthAdjust="spacing">Elora</text>
<text x="729" y="853.7" font-size="17" fill="#737373" textLength="75.5" lengthAdjust="spacing">Brucedale</text>
<text x="898" y="856" font-size="17" fill="#737373" textLength="87.5" lengthAdjust="spacing">Halton Hills</text>
<text x="770.5" y="897" font-size="17" fill="#737373" textLength="79.5" lengthAdjust="spacing">Rockwood</text>
<text x="618.7" y="943.7" font-size="17" fill="#737373" textLength="57.3" lengthAdjust="spacing">Marden</text>
<text x="768" y="955" font-size="17" fill="#737373" textLength="78" lengthAdjust="spacing">Eden Mills</text>
<text x="561" y="960" font-size="17" fill="#737373" textLength="38" lengthAdjust="spacing">Ariss</text>
<text x="952.5" y="968.7" font-size="17" fill="#737373" textLength="100.5" lengthAdjust="spacing">Scotch Block</text>
<text x="667.5" y="1005" font-size="23.5" fill="#4b4b4b" textLength="68" lengthAdjust="spacing">Guelph</text>
<text x="1014" y="850.5" font-size="13.5" fill="#7a7a7a" font-weight="bold" textLength="95" lengthAdjust="spacing">GEORGETOWN</text>
<text x="616" y="1183.7" font-size="17" fill="#737373" textLength="113.5" lengthAdjust="spacing">Barber&#x27;s Beach</text>
<text x="801" y="1143" font-size="17" fill="#737373" textLength="74" lengthAdjust="spacing">Morriston</text>
<text x="827.5" y="1164.5" font-size="17" fill="#737373" textLength="64.5" lengthAdjust="spacing">Puslinch</text>
<text x="1139" y="905" font-size="17" fill="#737373" textLength="66" lengthAdjust="spacing">Whaley&#x27;s</text>
<text x="1142" y="922.5" font-size="17" fill="#737373" textLength="59" lengthAdjust="spacing">Corners</text>
<text x="1265" y="941" font-size="26" fill="#4b4b4b" textLength="135" lengthAdjust="spacing">Mississauga</text>
<text x="1097.5" y="971" font-size="17" fill="#737373" textLength="53.5" lengthAdjust="spacing">Hornby</text>
<text x="1427.5" y="894" font-size="13.5" fill="#7a7a7a" font-weight="bold" textLength="83.5" lengthAdjust="spacing">ETOBICOKE</text>
<text x="1564" y="849.5" font-size="25" fill="#4b4b4b" textLength="83" lengthAdjust="spacing">Toronto</text>
<text x="1062" y="1041" font-size="17" fill="#737373" textLength="46" lengthAdjust="spacing">Milton</text>
<text x="1249.5" y="1116" font-size="22.5" fill="#4b4b4b" textLength="75.5" lengthAdjust="spacing">Oakville</text>
<text x="1057.5" y="1235" font-size="17" fill="#737373" textLength="69.5" lengthAdjust="spacing">Highview</text>
<text x="1068" y="1254" font-size="17" fill="#737373" textLength="51" lengthAdjust="spacing">Survey</text>
<text x="985" y="757" font-size="17" fill="#737373" textLength="84" lengthAdjust="spacing">Terra Cotta</text>
<text x="69" y="1256" font-size="17" fill="#737373" textLength="66" lengthAdjust="spacing">kespeare</text>
</g>
<g font-family="Liberation Sans,Arial,sans-serif" font-size="12.8" fill="#4a4a4a" text-anchor="middle">
<path d="M352 741q-2 0 -1.7 2l2 16q.300 2 2.3 2h10.8q2 0 2.3 -2l2 -16q.300 -2 -1.7 -2z" fill="#fff" stroke="#6f6f6f" stroke-width="1.4" stroke-linejoin="round"/>
<text x="360" y="755.5">8</text>
<path d="M394.25 752q-2 0 -1.7 2l2 16q.300 2 2.3 2h16.3q2 0 2.3 -2l2 -16q.300 -2 -1.7 -2z" fill="#fff" stroke="#6f6f6f" stroke-width="1.4" stroke-linejoin="round"/>
<text x="405" y="766.5">17</text>
<path d="M99.25 803q-2 0 -1.7 2l2 16q.300 2 2.3 2h16.3q2 0 2.3 -2l2 -16q.300 -2 -1.7 -2z" fill="#fff" stroke="#6f6f6f" stroke-width="1.4" stroke-linejoin="round"/>
<text x="110" y="817.5">86</text>
<path d="M61.25 828q-2 0 -1.7 2l2 16q.300 2 2.3 2h16.3q2 0 2.3 -2l2 -16q.300 -2 -1.7 -2z" fill="#fff" stroke="#6f6f6f" stroke-width="1.4" stroke-linejoin="round"/>
<text x="72" y="842.5">31</text>
<path d="M245.25 836q-2 0 -1.7 2l2 16q.300 2 2.3 2h16.3q2 0 2.3 -2l2 -16q.300 -2 -1.7 -2z" fill="#fff" stroke="#6f6f6f" stroke-width="1.4" stroke-linejoin="round"/>
<text x="256" y="850.5">12</text>
<path d="M452.25 805q-2 0 -1.7 2l2 16q.300 2 2.3 2h16.3q2 0 2.3 -2l2 -16q.300 -2 -1.7 -2z" fill="#fff" stroke="#6f6f6f" stroke-width="1.4" stroke-linejoin="round"/>
<text x="463" y="819.5">18</text>
<path d="M175 963q-2 0 -1.7 2l2 16q.300 2 2.3 2h10.8q2 0 2.3 -2l2 -16q.300 -2 -1.7 -2z" fill="#fff" stroke="#6f6f6f" stroke-width="1.4" stroke-linejoin="round"/>
<text x="183" y="977.5">5</text>
<path d="M247.25 961q-2 0 -1.7 2l2 16q.300 2 2.3 2h16.3q2 0 2.3 -2l2 -16q.300 -2 -1.7 -2z" fill="#fff" stroke="#6f6f6f" stroke-width="1.4" stroke-linejoin="round"/>
<text x="258" y="975.5">17</text>
<path d="M280.25 1129q-2 0 -1.7 2l2 16q.300 2 2.3 2h16.3q2 0 2.3 -2l2 -16q.300 -2 -1.7 -2z" fill="#fff" stroke="#6f6f6f" stroke-width="1.4" stroke-linejoin="round"/>
<text x="291" y="1143.5">12</text>
<path d="M66.25 1160q-2 0 -1.7 2l2 16q.300 2 2.3 2h16.3q2 0 2.3 -2l2 -16q.300 -2 -1.7 -2z" fill="#fff" stroke="#6f6f6f" stroke-width="1.4" stroke-linejoin="round"/>
<text x="77" y="1174.5">43</text>
<path d="M311.5 1196q0 -3 3 -3h13q3 0 3 3v13l-9.5 5l-9.5 -5z" fill="#fff" stroke="#6f6f6f" stroke-width="1.4" stroke-linejoin="round"/>
<text x="321" y="1206.5">8</text>
<path d="M514.5 1169q0 -3 3 -3h13q3 0 3 3v13l-9.5 5l-9.5 -5z" fill="#fff" stroke="#6f6f6f" stroke-width="1.4" stroke-linejoin="round"/>
<text x="524" y="1179.5">8</text>
<path d="M620.5 1000q0 -3 3 -3h13q3 0 3 3v13l-9.5 5l-9.5 -5z" fill="#fff" stroke="#6f6f6f" stroke-width="1.4" stroke-linejoin="round"/>
<text x="630" y="1010.5">7</text>
<path d="M756.25 766q-2 0 -1.7 2l2 16q.300 2 2.3 2h16.3q2 0 2.3 -2l2 -16q.300 -2 -1.7 -2z" fill="#fff" stroke="#6f6f6f" stroke-width="1.4" stroke-linejoin="round"/>
<text x="767" y="780.5">26</text>
<path d="M793.5 785q-2 0 -1.7 2l2 16q.300 2 2.3 2h21.8q2 0 2.3 -2l2 -16q.300 -2 -1.7 -2z" fill="#fff" stroke="#6f6f6f" stroke-width="1.4" stroke-linejoin="round"/>
<text x="807" y="799.5">124</text>
<path d="M837.5 797q-2 0 -1.7 2l2 16q.300 2 2.3 2h21.8q2 0 2.3 -2l2 -16q.300 -2 -1.7 -2z" fill="#fff" stroke="#6f6f6f" stroke-width="1.4" stroke-linejoin="round"/>
<text x="851" y="811.5">125</text>
<path d="M973 808q0 -3 3 -3h13q3 0 3 3v13l-9.5 5l-9.5 -5z" fill="#fff" stroke="#6f6f6f" stroke-width="1.4" stroke-linejoin="round"/>
<text x="982.5" y="818.5">7</text>
<path d="M625.5 881q0 -3 3 -3h13q3 0 3 3v13l-9.5 5l-9.5 -5z" fill="#fff" stroke="#6f6f6f" stroke-width="1.4" stroke-linejoin="round"/>
<text x="635" y="891.5">6</text>
<path d="M743.25 902.5q-2 0 -1.7 2l2 16q.300 2 2.3 2h16.3q2 0 2.3 -2l2 -16q.300 -2 -1.7 -2z" fill="#fff" stroke="#6f6f6f" stroke-width="1.4" stroke-linejoin="round"/>
<text x="754" y="917">29</text>
<path d="M778 906q0 -3 3 -3h13q3 0 3 3v13l-9.5 5l-9.5 -5z" fill="#fff" stroke="#6f6f6f" stroke-width="1.4" stroke-linejoin="round"/>
<text x="787.5" y="916.5">7</text>
<path d="M633.25 1046q-2 0 -1.7 2l2 16q.300 2 2.3 2h16.3q2 0 2.3 -2l2 -16q.300 -2 -1.7 -2z" fill="#fff" stroke="#6f6f6f" stroke-width="1.4" stroke-linejoin="round"/>
<text x="644" y="1060.5">32</text>
<path d="M663.5 1051q-2 0 -1.7 2l2 16q.300 2 2.3 2h21.8q2 0 2.3 -2l2 -16q.300 -2 -1.7 -2z" fill="#fff" stroke="#6f6f6f" stroke-width="1.4" stroke-linejoin="round"/>
<text x="677" y="1065.5">124</text>
<path d="M711 1052q0 -3 3 -3h13q3 0 3 3v13l-9.5 5l-9.5 -5z" fill="#fff" stroke="#6f6f6f" stroke-width="1.4" stroke-linejoin="round"/>
<text x="720.5" y="1062.5">6</text>
<path d="M817.25 1061q-2 0 -1.7 2l2 16q.300 2 2.3 2h16.3q2 0 2.3 -2l2 -16q.300 -2 -1.7 -2z" fill="#fff" stroke="#6f6f6f" stroke-width="1.4" stroke-linejoin="round"/>
<text x="828" y="1075.5">34</text>
<path d="M852.5 1107q0 -3 3 -3h24q3 0 3 3v13l-15 5l-15 -5z" fill="#fff" stroke="#6f6f6f" stroke-width="1.4" stroke-linejoin="round"/>
<text x="867.5" y="1117.5">401</text>
<path d="M618.75 1127.5q-2 0 -1.7 2l2 16q.300 2 2.3 2h16.3q2 0 2.3 -2l2 -16q.300 -2 -1.7 -2z" fill="#fff" stroke="#6f6f6f" stroke-width="1.4" stroke-linejoin="round"/>
<text x="629.5" y="1142">24</text>
<path d="M1147.5 783q-2 0 -1.7 2l2 16q.300 2 2.3 2h21.8q2 0 2.3 -2l2 -16q.300 -2 -1.7 -2z" fill="#fff" stroke="#6f6f6f" stroke-width="1.4" stroke-linejoin="round"/>
<text x="1161" y="797.5">107</text>
<path d="M1239 779q0 -3 3 -3h24q3 0 3 3v13l-15 5l-15 -5z" fill="#fff" stroke="#6f6f6f" stroke-width="1.4" stroke-linejoin="round"/>
<text x="1254" y="789.5">410</text>
<path d="M1277 765.5q0 -3 3 -3h24q3 0 3 3v13l-15 5l-15 -5z" fill="#fff" stroke="#6f6f6f" stroke-width="1.4" stroke-linejoin="round"/>
<text x="1292" y="776">407</text>
<path d="M1314 870q0 -3 3 -3h24q3 0 3 3v13l-15 5l-15 -5z" fill="#fff" stroke="#6f6f6f" stroke-width="1.4" stroke-linejoin="round"/>
<text x="1329" y="880.5">403</text>
<path d="M1402.5 849q0 -3 3 -3h24q3 0 3 3v13l-15 5l-15 -5z" fill="#fff" stroke="#6f6f6f" stroke-width="1.4" stroke-linejoin="round"/>
<text x="1417.5" y="859.5">427</text>
<path d="M1284.5 954q0 -3 3 -3h24q3 0 3 3v13l-15 5l-15 -5z" fill="#fff" stroke="#6f6f6f" stroke-width="1.4" stroke-linejoin="round"/>
<text x="1299.5" y="964.5">403</text>
<path d="M1250 958q-2 0 -1.7 2l2 16q.300 2 2.3 2h10.8q2 0 2.3 -2l2 -16q.300 -2 -1.7 -2z" fill="#fff" stroke="#6f6f6f" stroke-width="1.4" stroke-linejoin="round"/>
<text x="1258" y="972.5">1</text>
<path d="M1090 994q0 -3 3 -3h24q3 0 3 3v13l-15 5l-15 -5z" fill="#fff" stroke="#6f6f6f" stroke-width="1.4" stroke-linejoin="round"/>
<text x="1105" y="1004.5">401</text>
<path d="M1319.25 1055q-2 0 -1.7 2l2 16q.300 2 2.3 2h16.3q2 0 2.3 -2l2 -16q.300 -2 -1.7 -2z" fill="#fff" stroke="#6f6f6f" stroke-width="1.4" stroke-linejoin="round"/>
<text x="1330" y="1069.5">19</text>
<path d="M1135.25 1083q-2 0 -1.7 2l2 16q.300 2 2.3 2h16.3q2 0 2.3 -2l2 -16q.300 -2 -1.7 -2z" fill="#fff" stroke="#6f6f6f" stroke-width="1.4" stroke-linejoin="round"/>
<text x="1146" y="1097.5">25</text>
<path d="M1169.5 1108.5q0 -3 3 -3h24q3 0 3 3v13l-15 5l-15 -5z" fill="#fff" stroke="#6f6f6f" stroke-width="1.4" stroke-linejoin="round"/>
<text x="1184.5" y="1119">407</text>
<path d="M1211.5 1112q-2 0 -1.7 2l2 16q.300 2 2.3 2h10.8q2 0 2.3 -2l2 -16q.300 -2 -1.7 -2z" fill="#fff" stroke="#6f6f6f" stroke-width="1.4" stroke-linejoin="round"/>
<text x="1219.5" y="1126.5">5</text>
<path d="M1199.25 1160.5q-2 0 -1.7 2l2 16q.300 2 2.3 2h16.3q2 0 2.3 -2l2 -16q.300 -2 -1.7 -2z" fill="#fff" stroke="#6f6f6f" stroke-width="1.4" stroke-linejoin="round"/>
<text x="1210" y="1175">25</text>
<path d="M1213 1190q0 -3 3 -3h24q3 0 3 3v13l-15 5l-15 -5z" fill="#fff" stroke="#6f6f6f" stroke-width="1.4" stroke-linejoin="round"/>
<text x="1228" y="1200.5">403</text>
<path d="M1069 1166q-2 0 -1.7 2l2 16q.300 2 2.3 2h10.8q2 0 2.3 -2l2 -16q.300 -2 -1.7 -2z" fill="#fff" stroke="#6f6f6f" stroke-width="1.4" stroke-linejoin="round"/>
<text x="1077" y="1180.5">1</text>
</g>
<!-- markers -->
<rect x="1285" y="984.5" width="6" height="6" fill="#fde9d9" stroke="#111" stroke-width="1.6"/>
<rect x="1297.5" y="984.5" width="6" height="6" fill="#fde9d9" stroke="#111" stroke-width="1.6"/>
<rect x="1389" y="981" width="6" height="6" fill="#fde9d9" stroke="#111" stroke-width="1.6"/>
<rect x="1338" y="1044" width="6" height="6" fill="none" stroke="#111" stroke-width="1.4"/>
<rect x="1343" y="1041" width="6" height="6" fill="none" stroke="#111" stroke-width="1.4"/>
<rect x="1745" y="747" width="34.5" height="7" fill="#000"/>
<rect x="383.7" y="1082" width="33" height="33" fill="#8e8e8e" stroke="#5a5a5a" stroke-width="1.5"/>
<rect x="380" y="1057" width="33.5" height="33.5" fill="#6e6e6e" stroke="#333" stroke-width="1.5"/>
<rect x="342" y="1109" width="33" height="33" fill="#717171" stroke="#454545" stroke-width="1.5"/>
<rect x="461" y="1140" width="33.5" height="33.5" fill="#363636" stroke="#1c1c1c" stroke-width="1.5"/>
<path d="M408 1082l10-11v-6q0-2 2-2h11q2 0 2 2v15q0 4.5-6 4.5z" fill="#e6e6e6" stroke="#fafafa" stroke-width="1.4"/>
<path d="M396.5 1073.4L416 1041" stroke="#fff" stroke-width="3.2" fill="none"/>
<path d="M396.5 1073.4L416 1041" stroke="#8a8a8a" stroke-width="1.1" fill="none"/>
<path d="M396.5 1073.4L431 1044.5" stroke="#fff" stroke-width="3.2" fill="none"/>
<path d="M396.5 1073.4L431 1044.5" stroke="#8a8a8a" stroke-width="1.1" fill="none"/>
<path d="M400.4 1098.6L376 1041" stroke="#fff" stroke-width="3.2" fill="none"/>
<path d="M400.4 1098.6L376 1041" stroke="#8a8a8a" stroke-width="1.1" fill="none"/>
<path d="M358.6 1125.8L338.7 1141" stroke="#fff" stroke-width="3.2" fill="none"/>
<path d="M358.6 1125.8L338.7 1141" stroke="#8a8a8a" stroke-width="1.1" fill="none"/>
<path d="M477.6 1157L518 1097.6" stroke="#fff" stroke-width="3.2" fill="none"/>
<path d="M477.6 1157L518 1097.6" stroke="#444" stroke-width="1.1" fill="none"/>
<circle cx="396.5" cy="1073.4" r="4.5" fill="#6e6e6e" stroke="#fff" stroke-width="1.7"/>
<circle cx="400.4" cy="1098.6" r="4.5" fill="#8e8e8e" stroke="#fff" stroke-width="1.7"/>
<circle cx="358.6" cy="1125.8" r="4.5" fill="#717171" stroke="#fff" stroke-width="1.7"/>
<circle cx="477.6" cy="1157" r="4.5" fill="#363636" stroke="#fff" stroke-width="1.7"/>
<rect x="433" y="990" width="179.5" height="25.6" rx="4.5" fill="#fff" stroke="#7a8094" stroke-width="1.7"/>
<text x="494.5" y="1009" font-family="Liberation Sans,Arial,sans-serif" font-size="17" fill="#111" textLength="57.5" lengthAdjust="spacing">Trailer 5</text>
<rect x="316.6" y="1016.5" width="109.7" height="24.5" rx="4.5" fill="#fff" stroke="#7a8094" stroke-width="1.7"/>
<text x="343" y="1034.95" font-family="Liberation Sans,Arial,sans-serif" font-size="17" fill="#111" textLength="58.5" lengthAdjust="spacing">Trailer 8</text>
<rect x="430.5" y="1021.6" width="87.5" height="26.4" rx="4.5" fill="#fff" stroke="#7a8094" stroke-width="1.7"/>
<text x="446" y="1041" font-family="Liberation Sans,Arial,sans-serif" font-size="17" fill="#111" textLength="58" lengthAdjust="spacing">Trailer 7</text>
<rect x="517" y="1072.6" width="87" height="25" rx="4.5" fill="#fff" stroke="#7a8094" stroke-width="1.7"/>
<text x="532" y="1091.3" font-family="Liberation Sans,Arial,sans-serif" font-size="17" fill="#111" textLength="58.5" lengthAdjust="spacing">Trailer 6</text>
<rect x="287.6" y="1142" width="90.2" height="26" rx="4.5" fill="#fff" stroke="#7a8094" stroke-width="1.7"/>
<text x="303.5" y="1161.2" font-family="Liberation Sans,Arial,sans-serif" font-size="17" fill="#111" textLength="59" lengthAdjust="spacing">Trailer 9</text>
<rect x="1301" y="835" width="34" height="34" fill="#383838" stroke="#1c1c1c" stroke-width="1.5"/>
<rect x="1418" y="856" width="34" height="34" fill="#383838" stroke="#1c1c1c" stroke-width="1.5"/>
<rect x="1384" y="924" width="34" height="34" fill="#2d2d2d" stroke="#1c1c1c" stroke-width="1.5"/>
<path d="M1318 852L1353 794" stroke="#fff" stroke-width="3.2" fill="none"/>
<path d="M1318 852L1353 794" stroke="#333" stroke-width="1.1" fill="none"/>
<path d="M1435 872.5L1468 812.5" stroke="#fff" stroke-width="3.2" fill="none"/>
<path d="M1435 872.5L1468 812.5" stroke="#333" stroke-width="1.1" fill="none"/>
<path d="M1400.5 941L1382 883" stroke="#fff" stroke-width="3.2" fill="none"/>
<path d="M1400.5 941L1382 883" stroke="#333" stroke-width="1.1" fill="none"/>
<circle cx="1318" cy="852" r="4.5" fill="#383838" stroke="#fff" stroke-width="1.7"/>
<circle cx="1435" cy="872.5" r="4.5" fill="#383838" stroke="#fff" stroke-width="1.7"/>
<circle cx="1400.5" cy="941" r="4.5" fill="#2d2d2d" stroke="#fff" stroke-width="1.7"/>
<rect x="1350" y="767.5" width="87.5" height="26.5" rx="4.5" fill="#fff" stroke="#7a8094" stroke-width="1.7"/>
<text x="1364.5" y="786.95" font-family="Liberation Sans,Arial,sans-serif" font-size="17" fill="#111" textLength="57.5" lengthAdjust="spacing">Trailer 1</text>
<rect x="1465" y="787.5" width="168" height="25.5" rx="4.5" fill="#fff" stroke="#7a8094" stroke-width="1.7"/>
<text x="1469.5" y="806.45" font-family="Liberation Sans,Arial,sans-serif" font-size="17" fill="#111" textLength="159" lengthAdjust="spacing">Trailer 2 (John Smith)</text>
<rect x="1339" y="856" width="87" height="27" rx="4.5" fill="#fff" stroke="#7a8094" stroke-width="1.7"/>
<text x="1353" y="875.7" font-family="Liberation Sans,Arial,sans-serif" font-size="17" fill="#111" textLength="58.5" lengthAdjust="spacing">Trailer 3</text>
<rect x="1228" y="1126" width="34" height="34" fill="#2424b8" stroke="#15158a" stroke-width="1.5"/>
<path d="M1244.5 1143L1235 1085" stroke="#fff" stroke-width="3.2" fill="none"/>
<path d="M1244.5 1143L1235 1085" stroke="#5a62c8" stroke-width="1.1" fill="none"/>
<circle cx="1244.5" cy="1143" r="4.5" fill="#2424b8" stroke="#fff" stroke-width="1.7"/>
<rect x="1169.5" y="1059.5" width="86.5" height="25.5" rx="4.5" fill="#fff" stroke="#8a92d6" stroke-width="1.7"/>
<text x="1184" y="1078.45" font-family="Liberation Sans,Arial,sans-serif" font-size="17" fill="#111" textLength="59" lengthAdjust="spacing">Trailer 4</text>
<text x="1049" y="1041" font-family="Liberation Sans,Arial,sans-serif" font-size="18.6" font-weight="bold" fill="#0c0c0c" textLength="476" lengthAdjust="spacing">2500 Winston Park Dr, Oakville, ON L6H 7E5, Canada</text>
<circle cx="1290" cy="1041.5" r="30" fill="#fff"/>
<path d="M1290 1013A28.5 28.5 0 0 1 1309.8 1062L1299.73 1051.57A14 14 0 0 0 1290 1027.5Z" fill="#3f9b3a"/>
<path d="M1309.8 1062A28.5 28.5 0 1 1 1290 1013L1290 1027.5A14 14 0 1 0 1299.73 1051.57Z" fill="#f5a131"/>
<text x="1288.5" y="1047.5" font-family="Liberation Sans,Arial,sans-serif" font-size="16.5" font-weight="bold" fill="#2140d8" text-anchor="middle">8</text>
<path d="M1999 1035.5L1796 1133.5L1853 1248" fill="none" stroke="#56606b" stroke-width="1.2"/>
<rect x="83" y="755.5" width="233" height="54.5" rx="2" fill="#fff" style="filter:drop-shadow(0 1px 2px rgba(0,0,0,.3))"/>
<path d="M179.5 756v54" stroke="#e6e6e6" stroke-width="1"/>
<text x="107" y="792.5" font-family="Liberation Sans,Arial,sans-serif" font-size="24.5" font-weight="bold" fill="#000" textLength="49" lengthAdjust="spacing">Map</text>
<text x="204" y="792.5" font-family="Liberation Sans,Arial,sans-serif" font-size="24.5" fill="#565656" textLength="88.5" lengthAdjust="spacing">Satellite</text>
<rect x="1957" y="1142" width="50" height="120" rx="2" fill="#fff" style="filter:drop-shadow(0 1px 2px rgba(0,0,0,.3))"/>
<path d="M1972.7 1170.3h26M1985.8 1158v25M1972.7 1229.3h26" stroke="#666" stroke-width="5.5" fill="none"/>
<path d="M1964 1200h36" stroke="#e6e6e6" stroke-width="1"/>
<rect x="1997.4" y="748" width="2" height="502" fill="#f2f8fd" opacity=".9"/>
</g>
</svg>
<div class="abs" style="left:0;top:1248.8px;width:1999px;height:1.2px;background:#0a0a0a;z-index:9"></div>
<div class="abs" style="left:1005px;top:708px;width:58px;height:76px;border-radius:5px;background:#0b78d0;box-shadow:0 1px 4px rgba(0,0,0,.25);z-index:8"></div>
<div class="abs" style="left:1005px;top:745px;width:58px;height:2px;background:#4d9bdc;z-index:9"></div>
<svg class="abs" style="left:1020px;top:714px;z-index:9" width="28" height="66" viewBox="0 0 28 66"><path d="M4 18.5L14.3 7.5l10.3 11M4 46.5l10.3 11 10.3-11" fill="none" stroke="#fff" stroke-width="3.2" stroke-linecap="round" stroke-linejoin="round"/></svg>
</body>
</html>
